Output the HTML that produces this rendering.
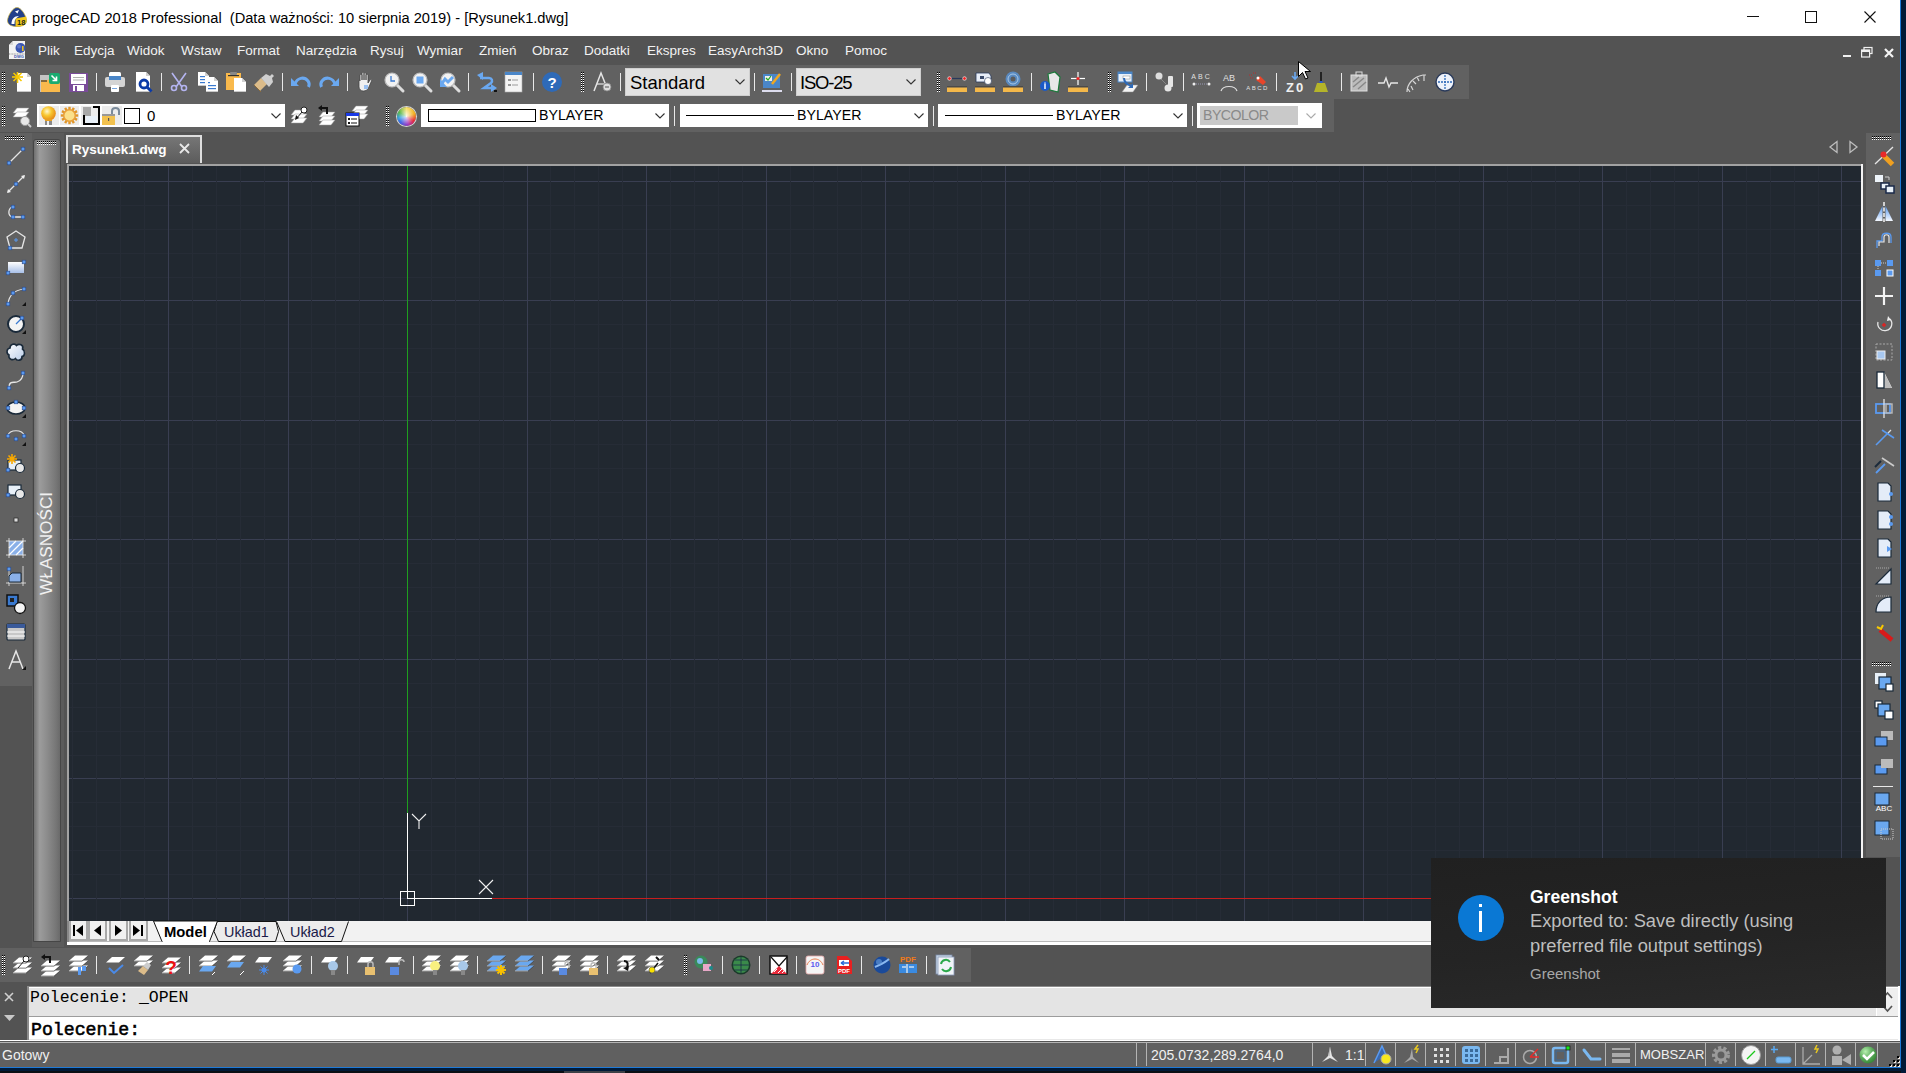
<!DOCTYPE html><html><head><meta charset="utf-8"><style>
*{margin:0;padding:0;box-sizing:border-box}
html,body{width:1906px;height:1073px;overflow:hidden;background:#535353;font-family:"Liberation Sans",sans-serif}
.a{position:absolute}
.t{position:absolute;white-space:nowrap;line-height:1}
svg{position:absolute;overflow:visible}
</style></head><body><div class="a" style="left:0px;top:0px;width:1906px;height:36px;background:#ffffff;"></div>
<svg style="left:7px;top:7px" width="20" height="20" viewBox="0 0 20 20"><path d="M10 0.5C14 0.5 19 8 19.5 13.5C19.5 18 15 19.5 10 19.5C5 19.5 0.5 18 0.5 13.5C1 8 6 0.5 10 0.5z" fill="#23408a" stroke="#c8b040" stroke-width="0.7"/><path d="M8.5 11.5L19.3 9.5C19.5 11.5 19.5 13.5 19.5 13.5C19.5 18 15 19.5 10 19.5L8.5 19.5z" fill="#f2c81a"/><path d="M4.5 17C4.5 12 7 9 12 9L9.5 11C8 12 7.5 14 7.5 17z" fill="#fff"/><path d="M8 4.5l4-1.5-1.5 3.5z" fill="#fff"/><text x="14.2" y="17.5" font-size="7.5" font-weight="bold" text-anchor="middle" fill="#1a2a1a" font-family="Liberation Sans">18</text></svg>
<div class="t" style="left:32px;top:11px;font-size:14.65px;color:#000;">progeCAD 2018 Professional&nbsp; (Data ważności: 10 sierpnia 2019) - [Rysunek1.dwg]</div>
<div class="a" style="left:1747px;top:16px;width:12px;height:1px;background:#111;"></div>
<div class="a" style="left:1805px;top:11px;width:12px;height:12px;background:transparent;border:1px solid #111"></div>
<svg style="left:1864px;top:11px" width="12" height="12" viewBox="0 0 12 12"><path d="M0.5 0.5l11 11M11.5 0.5l-11 11" stroke="#111" stroke-width="1.1"/></svg>
<div class="a" style="left:0px;top:36px;width:1900px;height:29px;background:#535353;"></div>
<svg style="left:9px;top:41px" width="16" height="18" viewBox="0 0 16 18"><path d="M4 0h12v18h-16v-14z" fill="#f2f2f2"/><path d="M0 4l4-4v4z" fill="#d8d8d8"/><circle cx="11.5" cy="7" r="5" fill="#3a56b0"/><circle cx="10" cy="5.5" r="2" fill="#7a8ad8" opacity="0.6"/><rect x="13" y="5" width="1.6" height="5" fill="#e8c020"/><path d="M0 13h16" stroke="#555" stroke-width="0.6" stroke-dasharray="1 0.6"/><text x="10" y="17.3" font-size="4" font-weight="bold" fill="#3a56b0" font-family="Liberation Sans" text-anchor="middle">DWG</text></svg>
<div class="t" style="left:38px;top:44px;font-size:13.5px;color:#f2f2f2;">Plik</div>
<div class="t" style="left:74px;top:44px;font-size:13.5px;color:#f2f2f2;">Edycja</div>
<div class="t" style="left:127px;top:44px;font-size:13.5px;color:#f2f2f2;">Widok</div>
<div class="t" style="left:181px;top:44px;font-size:13.5px;color:#f2f2f2;">Wstaw</div>
<div class="t" style="left:237px;top:44px;font-size:13.5px;color:#f2f2f2;">Format</div>
<div class="t" style="left:296px;top:44px;font-size:13.5px;color:#f2f2f2;">Narzędzia</div>
<div class="t" style="left:370px;top:44px;font-size:13.5px;color:#f2f2f2;">Rysuj</div>
<div class="t" style="left:417px;top:44px;font-size:13.5px;color:#f2f2f2;">Wymiar</div>
<div class="t" style="left:479px;top:44px;font-size:13.5px;color:#f2f2f2;">Zmień</div>
<div class="t" style="left:532px;top:44px;font-size:13.5px;color:#f2f2f2;">Obraz</div>
<div class="t" style="left:584px;top:44px;font-size:13.5px;color:#f2f2f2;">Dodatki</div>
<div class="t" style="left:647px;top:44px;font-size:13.5px;color:#f2f2f2;">Ekspres</div>
<div class="t" style="left:708px;top:44px;font-size:13.5px;color:#f2f2f2;">EasyArch3D</div>
<div class="t" style="left:796px;top:44px;font-size:13.5px;color:#f2f2f2;">Okno</div>
<div class="t" style="left:845px;top:44px;font-size:13.5px;color:#f2f2f2;">Pomoc</div>
<div class="a" style="left:1843px;top:55px;width:8px;height:2px;background:#f0f0f0;"></div>
<svg style="left:1861px;top:47px" width="12" height="11" viewBox="0 0 12 11"><rect x="3" y="0.5" width="8" height="6" fill="none" stroke="#f0f0f0" stroke-width="1.2"/><rect x="0.6" y="3" width="8" height="7" fill="#535353" stroke="#f0f0f0" stroke-width="1.2"/><rect x="0.6" y="3" width="8" height="2" fill="#f0f0f0"/></svg>
<svg style="left:1884px;top:48px" width="10" height="10" viewBox="0 0 10 10"><path d="M1 1l8 8M9 1l-8 8" stroke="#f4f4f4" stroke-width="2.2"/></svg>
<div class="a" style="left:0px;top:65px;width:1469px;height:34px;background:#616161;"></div>
<div class="a" style="left:0px;top:99px;width:1334px;height:33px;background:#616161;"></div>
<svg style="left:2px;top:72px" width="3" height="20" viewBox="0 0 3 20" shape-rendering="crispEdges"><rect x="0" y="0" width="1" height="1" fill="#000"/><rect x="2" y="0" width="1" height="1" fill="#000"/><rect x="0" y="1" width="1" height="1" fill="#fff"/><rect x="2" y="1" width="1" height="1" fill="#fff"/><rect x="0" y="2" width="1" height="1" fill="#000"/><rect x="2" y="2" width="1" height="1" fill="#000"/><rect x="0" y="3" width="1" height="1" fill="#fff"/><rect x="2" y="3" width="1" height="1" fill="#fff"/><rect x="0" y="4" width="1" height="1" fill="#000"/><rect x="2" y="4" width="1" height="1" fill="#000"/><rect x="0" y="5" width="1" height="1" fill="#fff"/><rect x="2" y="5" width="1" height="1" fill="#fff"/><rect x="0" y="6" width="1" height="1" fill="#000"/><rect x="2" y="6" width="1" height="1" fill="#000"/><rect x="0" y="7" width="1" height="1" fill="#fff"/><rect x="2" y="7" width="1" height="1" fill="#fff"/><rect x="0" y="8" width="1" height="1" fill="#000"/><rect x="2" y="8" width="1" height="1" fill="#000"/><rect x="0" y="9" width="1" height="1" fill="#fff"/><rect x="2" y="9" width="1" height="1" fill="#fff"/><rect x="0" y="10" width="1" height="1" fill="#000"/><rect x="2" y="10" width="1" height="1" fill="#000"/><rect x="0" y="11" width="1" height="1" fill="#fff"/><rect x="2" y="11" width="1" height="1" fill="#fff"/><rect x="0" y="12" width="1" height="1" fill="#000"/><rect x="2" y="12" width="1" height="1" fill="#000"/><rect x="0" y="13" width="1" height="1" fill="#fff"/><rect x="2" y="13" width="1" height="1" fill="#fff"/><rect x="0" y="14" width="1" height="1" fill="#000"/><rect x="2" y="14" width="1" height="1" fill="#000"/><rect x="0" y="15" width="1" height="1" fill="#fff"/><rect x="2" y="15" width="1" height="1" fill="#fff"/><rect x="0" y="16" width="1" height="1" fill="#000"/><rect x="2" y="16" width="1" height="1" fill="#000"/><rect x="0" y="17" width="1" height="1" fill="#fff"/><rect x="2" y="17" width="1" height="1" fill="#fff"/><rect x="0" y="18" width="1" height="1" fill="#000"/><rect x="2" y="18" width="1" height="1" fill="#000"/><rect x="0" y="19" width="1" height="1" fill="#fff"/><rect x="2" y="19" width="1" height="1" fill="#fff"/></svg>
<svg style="left:12px;top:72px" width="20" height="20" viewBox="0 0 20 20"><path d="M5 1h10l4 4v15h-14z" fill="#fff"/><path d="M15 1v4h4" fill="#d0d0d0"/><path d="M5 20h14v-1h-14z" fill="#c8c8c8"/><g stroke="#f8c800" stroke-width="1.6"><line x1="0" y1="5" x2="11" y2="5"/><line x1="5.5" y1="0" x2="5.5" y2="11"/><line x1="1.5" y1="1" x2="9.5" y2="9"/><line x1="9.5" y1="1" x2="1.5" y2="9"/></g></svg>
<svg style="left:40px;top:72px" width="20" height="20" viewBox="0 0 20 20"><rect x="0" y="3" width="9" height="17" fill="#c4c4c4"/><path d="M1 8h7l2-2h10v14h-19z" fill="#f9b94c"/><path d="M1 9h6" stroke="#333" stroke-width="1.2"/><rect x="9" y="1" width="11" height="11" rx="2" fill="#1aab70"/><path d="M11.5 3.5l5 5m0-4v4h-4" stroke="#fff" stroke-width="1.6" fill="none"/></svg>
<svg style="left:69px;top:72px" width="20" height="20" viewBox="0 0 20 20"><rect x="0" y="1" width="19" height="19" fill="#7a4c9a"/><rect x="2" y="2" width="15" height="10" fill="#fff"/><rect x="4" y="5" width="11" height="1" fill="#b0b0b0"/><rect x="4" y="7.5" width="11" height="1" fill="#b0b0b0"/><rect x="4" y="13" width="11" height="6" fill="#fff"/><rect x="6" y="14" width="2" height="5" fill="#7a4c9a"/></svg>
<div class="a" style="left:96px;top:73px;width:1px;height:18px;background:#e8e8e8;"></div>
<svg style="left:105px;top:72px" width="20" height="20" viewBox="0 0 20 20"><rect x="4" y="0" width="12" height="6" rx="1.5" fill="#fff"/><rect x="0" y="5" width="20" height="10" rx="2" fill="#d4d4d4"/><rect x="4" y="4" width="12" height="4" fill="#4a86c8"/><rect x="6" y="13" width="8" height="7" rx="1" fill="#fff"/><rect x="7" y="16" width="5" height="1" fill="#7aa8e0"/></svg>
<svg style="left:136px;top:72px" width="20" height="20" viewBox="0 0 20 20"><path d="M0 0h10l4 4v16h-14z" fill="#fff"/><path d="M10 0v4h4" fill="#d0d0d0"/><path d="M0 20h14v-1h-14z" fill="#c8c8c8"/><circle cx="8" cy="12" r="4" fill="none" stroke="#0a3aa8" stroke-width="2.8"/><path d="M10.5 14.5l5 5" stroke="#0a3aa8" stroke-width="3"/></svg>
<div class="a" style="left:161px;top:73px;width:1px;height:18px;background:#e8e8e8;"></div>
<svg style="left:170px;top:72px" width="20" height="20" viewBox="0 0 20 20"><g stroke="#b4b4f0" stroke-width="1.6" fill="none"><path d="M2 1l10 14M16 1l-10 14"/><circle cx="4" cy="16" r="2.5"/><circle cx="14" cy="16" r="2.5"/></g></svg>
<svg style="left:198px;top:72px" width="20" height="20" viewBox="0 0 20 20"><path d="M0 0h7l4 4v10h-11z" fill="#fff"/><path d="M7 0v4h4" fill="#d0d0d0"/><path d="M0 14h11v-1h-11z" fill="#c8c8c8"/><rect x="2" y="4" width="5" height="1.2" fill="#3a7ad0"/><rect x="2" y="7" width="5" height="1.2" fill="#3a7ad0"/><rect x="2" y="10" width="5" height="1.2" fill="#3a7ad0"/><path d="M8 5h8l4 4v11h-12z" fill="#fff"/><path d="M16 5v4h4" fill="#d0d0d0"/><path d="M8 20h12v-1h-12z" fill="#c8c8c8"/><rect x="10" y="10" width="2" height="1.2" fill="#3a7ad0"/><rect x="10" y="13" width="8" height="1.2" fill="#3a7ad0"/><rect x="10" y="16" width="8" height="1.2" fill="#3a7ad0"/></svg>
<svg style="left:226px;top:72px" width="20" height="20" viewBox="0 0 20 20"><rect x="0" y="1" width="15" height="17" fill="#f9b94c"/><rect x="4" y="0" width="7" height="3" rx="1" fill="#888"/><rect x="2" y="3" width="11" height="1.2" fill="#333"/><path d="M8 6h8l4 4v10h-12z" fill="#fff"/><path d="M16 6v4h4" fill="#d0d0d0"/><path d="M8 20h12v-1h-12z" fill="#c8c8c8"/></svg>
<svg style="left:254px;top:72px" width="20" height="20" viewBox="0 0 20 20"><path d="M0 13l7-7 6 6-7 7z" fill="#dcbc8a"/><path d="M0 13l7 7" stroke="#8a6a3a" stroke-width="1"/><path d="M7 6l5-4 4 2 2-2 2 2-2 2 1 4-4 5z" fill="#cfcfcf"/></svg>
<div class="a" style="left:282px;top:73px;width:1px;height:18px;background:#e8e8e8;"></div>
<svg style="left:291px;top:72px" width="20" height="20" viewBox="0 0 20 20"><path d="M4 12c2-6 9-8 13-3 1.5 2 1.5 4 0.5 6" fill="none" stroke="#6aa8f0" stroke-width="3"/><path d="M0 6v8h8z" fill="#6aa8f0"/></svg>
<svg style="left:319px;top:72px" width="20" height="20" viewBox="0 0 20 20"><path d="M16 12c-2-6-9-8-13-3-1.5 2-1.5 4-0.5 6" fill="none" stroke="#6aa8f0" stroke-width="3"/><path d="M20 6v8h-8z" fill="#6aa8f0"/></svg>
<div class="a" style="left:347px;top:73px;width:1px;height:18px;background:#e8e8e8;"></div>
<svg style="left:356px;top:72px" width="20" height="20" viewBox="0 0 20 20"><path d="M4 9V3c0-1 2-1 2 0v5V1c0-1 2-1 2 0v7V1.5c0-1 2-1 2 0V8V3c0-1 2-1 2 0v8l2-3c1-1 2 0 1.5 1l-3 7c-1 2-3 3-5 3H7c-2 0-4-2-4-4V9c0-1 1-1 1 0z" fill="#f0f0f0" stroke="#444" stroke-width="0.8"/><rect x="8" y="13" width="4" height="4" fill="#9ac0f0"/></svg>
<svg style="left:384px;top:72px" width="20" height="20" viewBox="0 0 20 20"><line x1="12" y1="12" x2="19" y2="19" stroke="#ddd" stroke-width="3" stroke-linecap="round"/><circle cx="8" cy="8" r="7" fill="#f2f2f2" stroke="#bbb" stroke-width="1.2"/><path d="M7 4v5h4" stroke="#3a7ad0" stroke-width="1.3" fill="none"/></svg>
<svg style="left:412px;top:72px" width="20" height="20" viewBox="0 0 20 20"><line x1="12" y1="12" x2="19" y2="19" stroke="#ddd" stroke-width="3" stroke-linecap="round"/><circle cx="8" cy="8" r="7" fill="#f2f2f2" stroke="#bbb" stroke-width="1.2"/><rect x="4.5" y="4.5" width="7" height="7" fill="#6aa8f0"/></svg>
<svg style="left:440px;top:72px" width="20" height="20" viewBox="0 0 20 20"><line x1="12" y1="12" x2="19" y2="19" stroke="#ddd" stroke-width="3" stroke-linecap="round"/><circle cx="8" cy="8" r="7" fill="#f2f2f2" stroke="#bbb" stroke-width="1.2"/><path d="M1 13l4-6 3 3 5-5" stroke="#6aa8f0" stroke-width="3" fill="none"/><path d="M0 7v8h7z" fill="#6aa8f0"/></svg>
<div class="a" style="left:468px;top:73px;width:1px;height:18px;background:#e8e8e8;"></div>
<svg style="left:477px;top:72px" width="20" height="20" viewBox="0 0 20 20"><path d="M3 6h9c3 0 4 3 2 5l-7 5h8" stroke="#6aa8f0" stroke-width="2.5" fill="none"/><path d="M0 3l6-3v8z" fill="#6aa8f0"/><path d="M20 16l-6 4v-8z" fill="#6aa8f0"/><rect x="17" y="18" width="3" height="2" fill="#111"/></svg>
<svg style="left:505px;top:72px" width="20" height="20" viewBox="0 0 20 20"><rect x="0" y="0" width="17" height="20" fill="#f4f4f4" stroke="#aaa" stroke-width="0.6"/><rect x="0" y="0" width="17" height="3" fill="#4a86c8"/><rect x="3" y="7" width="3" height="2" fill="#999"/><rect x="7" y="7.5" width="6" height="1" fill="#999"/><rect x="3" y="12" width="3" height="2" fill="#999"/><rect x="7" y="12.5" width="6" height="1" fill="#999"/></svg>
<div class="a" style="left:533px;top:73px;width:1px;height:18px;background:#e8e8e8;"></div>
<svg style="left:542px;top:72px" width="20" height="20" viewBox="0 0 20 20"><circle cx="10" cy="10" r="10" fill="#2e6ab8"/><text x="10" y="15.5" font-size="15" font-weight="bold" text-anchor="middle" fill="#fff" font-family="Liberation Sans">?</text></svg>
<svg style="left:581px;top:72px" width="3" height="20" viewBox="0 0 3 20" shape-rendering="crispEdges"><rect x="0" y="0" width="1" height="1" fill="#000"/><rect x="2" y="0" width="1" height="1" fill="#000"/><rect x="0" y="1" width="1" height="1" fill="#fff"/><rect x="2" y="1" width="1" height="1" fill="#fff"/><rect x="0" y="2" width="1" height="1" fill="#000"/><rect x="2" y="2" width="1" height="1" fill="#000"/><rect x="0" y="3" width="1" height="1" fill="#fff"/><rect x="2" y="3" width="1" height="1" fill="#fff"/><rect x="0" y="4" width="1" height="1" fill="#000"/><rect x="2" y="4" width="1" height="1" fill="#000"/><rect x="0" y="5" width="1" height="1" fill="#fff"/><rect x="2" y="5" width="1" height="1" fill="#fff"/><rect x="0" y="6" width="1" height="1" fill="#000"/><rect x="2" y="6" width="1" height="1" fill="#000"/><rect x="0" y="7" width="1" height="1" fill="#fff"/><rect x="2" y="7" width="1" height="1" fill="#fff"/><rect x="0" y="8" width="1" height="1" fill="#000"/><rect x="2" y="8" width="1" height="1" fill="#000"/><rect x="0" y="9" width="1" height="1" fill="#fff"/><rect x="2" y="9" width="1" height="1" fill="#fff"/><rect x="0" y="10" width="1" height="1" fill="#000"/><rect x="2" y="10" width="1" height="1" fill="#000"/><rect x="0" y="11" width="1" height="1" fill="#fff"/><rect x="2" y="11" width="1" height="1" fill="#fff"/><rect x="0" y="12" width="1" height="1" fill="#000"/><rect x="2" y="12" width="1" height="1" fill="#000"/><rect x="0" y="13" width="1" height="1" fill="#fff"/><rect x="2" y="13" width="1" height="1" fill="#fff"/><rect x="0" y="14" width="1" height="1" fill="#000"/><rect x="2" y="14" width="1" height="1" fill="#000"/><rect x="0" y="15" width="1" height="1" fill="#fff"/><rect x="2" y="15" width="1" height="1" fill="#fff"/><rect x="0" y="16" width="1" height="1" fill="#000"/><rect x="2" y="16" width="1" height="1" fill="#000"/><rect x="0" y="17" width="1" height="1" fill="#fff"/><rect x="2" y="17" width="1" height="1" fill="#fff"/><rect x="0" y="18" width="1" height="1" fill="#000"/><rect x="2" y="18" width="1" height="1" fill="#000"/><rect x="0" y="19" width="1" height="1" fill="#fff"/><rect x="2" y="19" width="1" height="1" fill="#fff"/></svg>
<svg style="left:593px;top:72px" width="20" height="20" viewBox="0 0 20 20"><path d="M1 19l7-18 6 15" stroke="#e6e6e6" stroke-width="1.5" fill="none"/><path d="M4 12h7" stroke="#e6e6e6" stroke-width="1.2"/><circle cx="14" cy="15" r="4" fill="#ddd" stroke="#888" stroke-width="0.8"/><rect x="12" y="14.5" width="4" height="1" fill="#555"/></svg>
<div class="a" style="left:620px;top:73px;width:1px;height:18px;background:#e8e8e8;"></div>
<div class="a" style="left:625px;top:68px;width:125px;height:28px;background:#e1e1e1;border:1px solid #cfcfcf"></div>
<div class="t" style="left:630px;top:74px;font-size:18.5px;color:#000;">Standard</div>
<svg style="left:735px;top:79px" width="10" height="6" viewBox="0 0 10 6"><path d="M0.5 0.5l4.5 4.5 4.5-4.5" stroke="#333" stroke-width="1.1" fill="none"/></svg>
<div class="a" style="left:754px;top:73px;width:1px;height:18px;background:#e8e8e8;"></div>
<svg style="left:762px;top:72px" width="20" height="20" viewBox="0 0 20 20"><rect x="1" y="2" width="17" height="14" fill="#4a86c8"/><rect x="3" y="4" width="7" height="5" fill="#eee"/><path d="M4 6l2 2 3-4" stroke="#2a2" stroke-width="1.2" fill="none"/><path d="M18 2l-8 10" stroke="#f0a820" stroke-width="2.5"/><rect x="0" y="18" width="20" height="2" fill="#dde"/></svg>
<div class="a" style="left:791px;top:73px;width:1px;height:18px;background:#e8e8e8;"></div>
<div class="a" style="left:796px;top:68px;width:125px;height:28px;background:#e1e1e1;border:1px solid #cfcfcf"></div>
<div class="t" style="left:800px;top:74px;font-size:18.5px;color:#000;letter-spacing:-1.2px">ISO-25</div>
<svg style="left:906px;top:79px" width="10" height="6" viewBox="0 0 10 6"><path d="M0.5 0.5l4.5 4.5 4.5-4.5" stroke="#333" stroke-width="1.1" fill="none"/></svg>
<svg style="left:937px;top:72px" width="3" height="20" viewBox="0 0 3 20" shape-rendering="crispEdges"><rect x="0" y="0" width="1" height="1" fill="#000"/><rect x="2" y="0" width="1" height="1" fill="#000"/><rect x="0" y="1" width="1" height="1" fill="#fff"/><rect x="2" y="1" width="1" height="1" fill="#fff"/><rect x="0" y="2" width="1" height="1" fill="#000"/><rect x="2" y="2" width="1" height="1" fill="#000"/><rect x="0" y="3" width="1" height="1" fill="#fff"/><rect x="2" y="3" width="1" height="1" fill="#fff"/><rect x="0" y="4" width="1" height="1" fill="#000"/><rect x="2" y="4" width="1" height="1" fill="#000"/><rect x="0" y="5" width="1" height="1" fill="#fff"/><rect x="2" y="5" width="1" height="1" fill="#fff"/><rect x="0" y="6" width="1" height="1" fill="#000"/><rect x="2" y="6" width="1" height="1" fill="#000"/><rect x="0" y="7" width="1" height="1" fill="#fff"/><rect x="2" y="7" width="1" height="1" fill="#fff"/><rect x="0" y="8" width="1" height="1" fill="#000"/><rect x="2" y="8" width="1" height="1" fill="#000"/><rect x="0" y="9" width="1" height="1" fill="#fff"/><rect x="2" y="9" width="1" height="1" fill="#fff"/><rect x="0" y="10" width="1" height="1" fill="#000"/><rect x="2" y="10" width="1" height="1" fill="#000"/><rect x="0" y="11" width="1" height="1" fill="#fff"/><rect x="2" y="11" width="1" height="1" fill="#fff"/><rect x="0" y="12" width="1" height="1" fill="#000"/><rect x="2" y="12" width="1" height="1" fill="#000"/><rect x="0" y="13" width="1" height="1" fill="#fff"/><rect x="2" y="13" width="1" height="1" fill="#fff"/><rect x="0" y="14" width="1" height="1" fill="#000"/><rect x="2" y="14" width="1" height="1" fill="#000"/><rect x="0" y="15" width="1" height="1" fill="#fff"/><rect x="2" y="15" width="1" height="1" fill="#fff"/><rect x="0" y="16" width="1" height="1" fill="#000"/><rect x="2" y="16" width="1" height="1" fill="#000"/><rect x="0" y="17" width="1" height="1" fill="#fff"/><rect x="2" y="17" width="1" height="1" fill="#fff"/><rect x="0" y="18" width="1" height="1" fill="#000"/><rect x="2" y="18" width="1" height="1" fill="#000"/><rect x="0" y="19" width="1" height="1" fill="#fff"/><rect x="2" y="19" width="1" height="1" fill="#fff"/></svg>
<svg style="left:947px;top:72px" width="20" height="20" viewBox="0 0 20 20"><line x1="2" y1="6.5" x2="18" y2="6.5" stroke="#2a3a5a" stroke-width="1.2"/><circle cx="2.5" cy="6.5" r="1.8" fill="#e22" stroke="#fff" stroke-width="0.6"/><circle cx="17.5" cy="6.5" r="1.8" fill="#e22" stroke="#fff" stroke-width="0.6"/><rect x="0" y="14" width="20" height="6" fill="#f4b84a"/><rect x="0" y="14" width="20" height="1.5" fill="#4a4a4a"/></svg>
<svg style="left:975px;top:72px" width="20" height="20" viewBox="0 0 20 20"><path d="M1 1h13l2 3v6c-2 2-5 2-6 0h-9z" fill="#e8eef8" stroke="#2a3a5a" stroke-width="0.8"/><circle cx="13" cy="9" r="3.5" fill="#fff" stroke="#2a3a5a" stroke-width="0.6"/><rect x="5" y="4" width="4" height="3" fill="#3a4a6a"/><rect x="0" y="14" width="20" height="6" fill="#f4b84a"/><rect x="0" y="14" width="20" height="1.5" fill="#4a4a4a"/></svg>
<svg style="left:1003px;top:72px" width="20" height="20" viewBox="0 0 20 20"><circle cx="10" cy="7" r="7.5" fill="#5a8ac0"/><circle cx="10" cy="7" r="5" fill="none" stroke="#a8c8e8" stroke-width="1"/><circle cx="10" cy="7" r="2.5" fill="#5c5c5c"/><rect x="0" y="14" width="20" height="6" fill="#f4b84a"/><rect x="0" y="14" width="20" height="1.5" fill="#4a4a4a"/></svg>
<div class="a" style="left:1031px;top:73px;width:1px;height:18px;background:#e8e8e8;"></div>
<svg style="left:1040px;top:72px" width="20" height="20" viewBox="0 0 20 20"><path d="M8 2l7-2 5 5-2 15-8-2z" fill="#e8e8e8" stroke="#1a7a3a" stroke-width="1.2"/><circle cx="5" cy="14" r="5" fill="#1a5ac8"/><rect x="4.3" y="12" width="1.4" height="5" fill="#fff"/><rect x="4.3" y="10.5" width="1.4" height="1.2" fill="#fff"/></svg>
<svg style="left:1068px;top:72px" width="20" height="20" viewBox="0 0 20 20"><line x1="3" y1="6.5" x2="17" y2="6.5" stroke="#fff" stroke-width="1.2"/><line x1="10" y1="0" x2="10" y2="13" stroke="#fff" stroke-width="1.2"/><circle cx="10" cy="6.5" r="1.6" fill="#e22"/><rect x="0" y="14" width="20" height="6" fill="#f4b84a"/><rect x="0" y="14" width="20" height="1.5" fill="#4a4a4a"/></svg>
<svg style="left:1108px;top:72px" width="3" height="20" viewBox="0 0 3 20" shape-rendering="crispEdges"><rect x="0" y="0" width="1" height="1" fill="#000"/><rect x="2" y="0" width="1" height="1" fill="#000"/><rect x="0" y="1" width="1" height="1" fill="#fff"/><rect x="2" y="1" width="1" height="1" fill="#fff"/><rect x="0" y="2" width="1" height="1" fill="#000"/><rect x="2" y="2" width="1" height="1" fill="#000"/><rect x="0" y="3" width="1" height="1" fill="#fff"/><rect x="2" y="3" width="1" height="1" fill="#fff"/><rect x="0" y="4" width="1" height="1" fill="#000"/><rect x="2" y="4" width="1" height="1" fill="#000"/><rect x="0" y="5" width="1" height="1" fill="#fff"/><rect x="2" y="5" width="1" height="1" fill="#fff"/><rect x="0" y="6" width="1" height="1" fill="#000"/><rect x="2" y="6" width="1" height="1" fill="#000"/><rect x="0" y="7" width="1" height="1" fill="#fff"/><rect x="2" y="7" width="1" height="1" fill="#fff"/><rect x="0" y="8" width="1" height="1" fill="#000"/><rect x="2" y="8" width="1" height="1" fill="#000"/><rect x="0" y="9" width="1" height="1" fill="#fff"/><rect x="2" y="9" width="1" height="1" fill="#fff"/><rect x="0" y="10" width="1" height="1" fill="#000"/><rect x="2" y="10" width="1" height="1" fill="#000"/><rect x="0" y="11" width="1" height="1" fill="#fff"/><rect x="2" y="11" width="1" height="1" fill="#fff"/><rect x="0" y="12" width="1" height="1" fill="#000"/><rect x="2" y="12" width="1" height="1" fill="#000"/><rect x="0" y="13" width="1" height="1" fill="#fff"/><rect x="2" y="13" width="1" height="1" fill="#fff"/><rect x="0" y="14" width="1" height="1" fill="#000"/><rect x="2" y="14" width="1" height="1" fill="#000"/><rect x="0" y="15" width="1" height="1" fill="#fff"/><rect x="2" y="15" width="1" height="1" fill="#fff"/><rect x="0" y="16" width="1" height="1" fill="#000"/><rect x="2" y="16" width="1" height="1" fill="#000"/><rect x="0" y="17" width="1" height="1" fill="#fff"/><rect x="2" y="17" width="1" height="1" fill="#fff"/><rect x="0" y="18" width="1" height="1" fill="#000"/><rect x="2" y="18" width="1" height="1" fill="#000"/><rect x="0" y="19" width="1" height="1" fill="#fff"/><rect x="2" y="19" width="1" height="1" fill="#fff"/></svg>
<svg style="left:1118px;top:72px" width="20" height="20" viewBox="0 0 20 20"><rect x="0" y="0" width="14" height="10" fill="#e8f0fa" stroke="#4a86c8" stroke-width="1"/><rect x="0" y="0" width="14" height="2" fill="#4a86c8"/><rect x="5" y="4" width="7" height="3" fill="#fff" stroke="#888" stroke-width="0.5"/><path d="M4 20l5-7h11l-5 7z" fill="#f4f4f4" stroke="#888" stroke-width="0.5"/><path d="M6 6c0 5 4 7 8 8" stroke="#2e6ab8" stroke-width="2" fill="none"/><path d="M15 11v5h-5z" fill="#2e6ab8"/></svg>
<div class="a" style="left:1146px;top:73px;width:1px;height:18px;background:#e8e8e8;"></div>
<svg style="left:1155px;top:72px" width="20" height="20" viewBox="0 0 20 20"><circle cx="4" cy="4" r="3.5" fill="#ddd"/><rect x="13" y="4" width="5" height="11" rx="1" fill="#e6e6e6"/><circle cx="13" cy="16" r="3.5" fill="#e6e6e6"/><path d="M6 7l5 5" stroke="#888" stroke-width="1"/></svg>
<div class="a" style="left:1183px;top:73px;width:1px;height:18px;background:#e8e8e8;"></div>
<svg style="left:1192px;top:72px" width="20" height="20" viewBox="0 0 20 20"><text x="9.5" y="7" font-size="7" text-anchor="middle" fill="#e0e0e0" font-family="Liberation Sans" letter-spacing="2">ABC</text><line x1="2" y1="12" x2="17" y2="12" stroke="#aac" stroke-width="0.8" stroke-dasharray="1 1"/><circle cx="2" cy="12" r="1.5" fill="#eee"/><circle cx="17" cy="12" r="1.5" fill="#eee"/></svg>
<svg style="left:1220px;top:72px" width="20" height="20" viewBox="0 0 20 20"><text x="9" y="9" font-size="9" text-anchor="middle" fill="#e0e0e0" font-family="Liberation Sans">AB</text><path d="M1 19c2-6 14-6 16 0" stroke="#e0e0e0" stroke-width="1.2" fill="none"/></svg>
<svg style="left:1248px;top:72px" width="20" height="20" viewBox="0 0 20 20"><text x="9.5" y="18" font-size="6" text-anchor="middle" fill="#e0e0e0" font-family="Liberation Sans" letter-spacing="1.5">ABCD</text><path d="M8 8l4-4 6 6-3 3z" fill="#e8452a"/><circle cx="10" cy="6" r="1.5" fill="#fff"/><path d="M1 3h3M5 1h3M2 6h3" stroke="#c22" stroke-width="0.8" stroke-dasharray="1 1"/></svg>
<div class="a" style="left:1276px;top:73px;width:1px;height:18px;background:#e8e8e8;"></div>
<svg style="left:1285px;top:72px" width="20" height="20" viewBox="0 0 20 20"><text x="1" y="20" font-size="13" font-weight="bold" fill="#f0f0f0" font-family="Liberation Sans">Z</text><text x="11" y="20" font-size="13" font-weight="bold" fill="#f0f0f0" font-family="Liberation Sans">0</text><path d="M10 0v7M7 4l3 3 3-3" stroke="#6aa8f0" stroke-width="1.6" fill="none"/></svg>
<svg style="left:1314px;top:72px" width="20" height="20" viewBox="0 0 20 20"><rect x="6" y="0" width="2" height="10" fill="#222"/><rect x="5.5" y="9" width="3" height="2" fill="#2a5ad0"/><path d="M3 11h8l3 9h-14z" fill="#b4b42a"/></svg>
<div class="a" style="left:1341px;top:73px;width:1px;height:18px;background:#e8e8e8;"></div>
<svg style="left:1350px;top:72px" width="20" height="20" viewBox="0 0 20 20"><rect x="1" y="3" width="16" height="16" fill="#bcbcbc" stroke="#e0e0e0" stroke-width="1"/><rect x="6" y="0" width="6" height="4" fill="none" stroke="#ddd" stroke-width="1"/><path d="M3 15l11-9M3 10l6-5M8 17l8-7" stroke="#888" stroke-width="1.5"/></svg>
<svg style="left:1378px;top:72px" width="20" height="20" viewBox="0 0 20 20"><path d="M0 11h6l2-5 3 9 2-4h7" stroke="#e6e6e6" stroke-width="1.4" fill="none"/></svg>
<svg style="left:1406px;top:72px" width="20" height="20" viewBox="0 0 20 20"><path d="M1 20c0-8 6-15 16-17M4 20l-2-3M7 18l-2-4M10 12l-3-3M13 9l-2-4M17 3h3M18 3v6" stroke="#d6d6d6" stroke-width="1.2" fill="none"/></svg>
<svg style="left:1435px;top:72px" width="20" height="20" viewBox="0 0 20 20"><circle cx="10" cy="10" r="9" fill="#eef2fa" stroke="#2a3a5a" stroke-width="1.4"/><path d="M10 3v14M3 10h14" stroke="#2e6ab8" stroke-width="1.3" stroke-dasharray="2 1"/></svg>
<svg style="left:2px;top:106px" width="3" height="20" viewBox="0 0 3 20" shape-rendering="crispEdges"><rect x="0" y="0" width="1" height="1" fill="#000"/><rect x="2" y="0" width="1" height="1" fill="#000"/><rect x="0" y="1" width="1" height="1" fill="#fff"/><rect x="2" y="1" width="1" height="1" fill="#fff"/><rect x="0" y="2" width="1" height="1" fill="#000"/><rect x="2" y="2" width="1" height="1" fill="#000"/><rect x="0" y="3" width="1" height="1" fill="#fff"/><rect x="2" y="3" width="1" height="1" fill="#fff"/><rect x="0" y="4" width="1" height="1" fill="#000"/><rect x="2" y="4" width="1" height="1" fill="#000"/><rect x="0" y="5" width="1" height="1" fill="#fff"/><rect x="2" y="5" width="1" height="1" fill="#fff"/><rect x="0" y="6" width="1" height="1" fill="#000"/><rect x="2" y="6" width="1" height="1" fill="#000"/><rect x="0" y="7" width="1" height="1" fill="#fff"/><rect x="2" y="7" width="1" height="1" fill="#fff"/><rect x="0" y="8" width="1" height="1" fill="#000"/><rect x="2" y="8" width="1" height="1" fill="#000"/><rect x="0" y="9" width="1" height="1" fill="#fff"/><rect x="2" y="9" width="1" height="1" fill="#fff"/><rect x="0" y="10" width="1" height="1" fill="#000"/><rect x="2" y="10" width="1" height="1" fill="#000"/><rect x="0" y="11" width="1" height="1" fill="#fff"/><rect x="2" y="11" width="1" height="1" fill="#fff"/><rect x="0" y="12" width="1" height="1" fill="#000"/><rect x="2" y="12" width="1" height="1" fill="#000"/><rect x="0" y="13" width="1" height="1" fill="#fff"/><rect x="2" y="13" width="1" height="1" fill="#fff"/><rect x="0" y="14" width="1" height="1" fill="#000"/><rect x="2" y="14" width="1" height="1" fill="#000"/><rect x="0" y="15" width="1" height="1" fill="#fff"/><rect x="2" y="15" width="1" height="1" fill="#fff"/><rect x="0" y="16" width="1" height="1" fill="#000"/><rect x="2" y="16" width="1" height="1" fill="#000"/><rect x="0" y="17" width="1" height="1" fill="#fff"/><rect x="2" y="17" width="1" height="1" fill="#fff"/><rect x="0" y="18" width="1" height="1" fill="#000"/><rect x="2" y="18" width="1" height="1" fill="#000"/><rect x="0" y="19" width="1" height="1" fill="#fff"/><rect x="2" y="19" width="1" height="1" fill="#fff"/></svg>
<svg style="left:12px;top:106px" width="20" height="20" viewBox="0 0 20 20"><path d="M5 2h12l-4 5h-12z" fill="#fff" stroke="#9a9a9a" stroke-width="0.5"/><path d="M5 6h12l-4 5h-12z" fill="#fff" stroke="#9a9a9a" stroke-width="0.5"/><circle cx="13" cy="15" r="4.5" fill="#e8e8e8" stroke="#999" stroke-width="1"/><path d="M16 18l3 3" stroke="#ccc" stroke-width="2"/></svg>
<div class="a" style="left:37px;top:104px;width:248px;height:23px;background:#ffffff;"></div>
<svg style="left:39px;top:106px" width="20" height="19" viewBox="0 0 20 19"><defs><radialGradient id="bg1" cx="0.4" cy="0.35" r="0.6"><stop offset="0" stop-color="#fff8d0"/><stop offset="0.5" stop-color="#f8c830"/><stop offset="1" stop-color="#e8901a"/></radialGradient></defs><rect x="0" y="0" width="20" height="19" fill="#ececec"/><circle cx="9.5" cy="7.5" r="7.3" fill="url(#bg1)"/><path d="M6 13h7v2h-7z" fill="#e8a020"/><rect x="6" y="15" width="7" height="4" fill="#8a8a8a"/><rect x="8" y="15" width="2" height="4" fill="#eee"/></svg>
<svg style="left:60px;top:106px" width="19" height="19" viewBox="0 0 19 19"><rect x="0" y="0" width="19" height="19" fill="#ececec"/><rect x="8.3" y="0.8" width="2.4" height="3.5" fill="#e0962a" transform="rotate(0 9.5 9.5)"/><rect x="8.3" y="0.8" width="2.4" height="3.5" fill="#e0962a" transform="rotate(30 9.5 9.5)"/><rect x="8.3" y="0.8" width="2.4" height="3.5" fill="#e0962a" transform="rotate(60 9.5 9.5)"/><rect x="8.3" y="0.8" width="2.4" height="3.5" fill="#e0962a" transform="rotate(90 9.5 9.5)"/><rect x="8.3" y="0.8" width="2.4" height="3.5" fill="#e0962a" transform="rotate(120 9.5 9.5)"/><rect x="8.3" y="0.8" width="2.4" height="3.5" fill="#e0962a" transform="rotate(150 9.5 9.5)"/><rect x="8.3" y="0.8" width="2.4" height="3.5" fill="#e0962a" transform="rotate(180 9.5 9.5)"/><rect x="8.3" y="0.8" width="2.4" height="3.5" fill="#e0962a" transform="rotate(210 9.5 9.5)"/><rect x="8.3" y="0.8" width="2.4" height="3.5" fill="#e0962a" transform="rotate(240 9.5 9.5)"/><rect x="8.3" y="0.8" width="2.4" height="3.5" fill="#e0962a" transform="rotate(270 9.5 9.5)"/><rect x="8.3" y="0.8" width="2.4" height="3.5" fill="#e0962a" transform="rotate(300 9.5 9.5)"/><rect x="8.3" y="0.8" width="2.4" height="3.5" fill="#e0962a" transform="rotate(330 9.5 9.5)"/><circle cx="9.5" cy="9.5" r="6.5" fill="#e8a03a"/><circle cx="9.5" cy="9.5" r="5" fill="#fbe08a"/></svg>
<svg style="left:81px;top:106px" width="19" height="19" viewBox="0 0 19 19"><rect x="0" y="0" width="19" height="19" fill="#ececec"/><rect x="2" y="1" width="8" height="9" fill="#a8a8a8"/><path d="M3 9v9h15v-17h-6" stroke="#000" stroke-width="2" fill="none"/><rect x="5" y="10" width="11" height="7" fill="#e8f0f8"/></svg>
<svg style="left:102px;top:106px" width="20" height="19" viewBox="0 0 20 19"><rect x="0" y="0" width="20" height="19" fill="#ececec"/><path d="M10 9V5c0-4 7-4 7 0v4" stroke="#7a8a9a" stroke-width="2" fill="none"/><rect x="0" y="8" width="13" height="11" fill="#f2c14e"/><rect x="0" y="8" width="13" height="2" fill="#999"/><rect x="6" y="12" width="1.2" height="3" fill="#555"/></svg>
<div class="a" style="left:124px;top:108px;width:16px;height:16px;background:#fff;border:1px solid #000"></div>
<div class="t" style="left:147px;top:108px;font-size:15px;color:#000;">0</div>
<svg style="left:271px;top:113px" width="10" height="6" viewBox="0 0 10 6"><path d="M0.5 0.5l4.5 4.5 4.5-4.5" stroke="#333" stroke-width="1.1" fill="none"/></svg>
<svg style="left:290px;top:106px" width="20" height="20" viewBox="0 0 20 20"><path d="M5 4h12l-4 5h-12z" fill="#fff" stroke="#9a9a9a" stroke-width="0.5"/><path d="M5 8h12l-4 5h-12z" fill="#fff" stroke="#9a9a9a" stroke-width="0.5"/><path d="M5 12h12l-4 5h-12z" fill="#fff" stroke="#9a9a9a" stroke-width="0.5"/><circle cx="14" cy="4" r="3" fill="#fff" stroke="#222" stroke-width="1"/><path d="M12 6l-6 7" stroke="#222" stroke-width="1"/><path d="M5 14l1-5 3 3z" fill="#111"/></svg>
<svg style="left:318px;top:106px" width="20" height="20" viewBox="0 0 20 20"><path d="M5 6h12l-4 5h-12z" fill="#fff" stroke="#9a9a9a" stroke-width="0.5"/><path d="M5 10h12l-4 5h-12z" fill="#fff" stroke="#9a9a9a" stroke-width="0.5"/><path d="M5 14h12l-4 5h-12z" fill="#fff" stroke="#9a9a9a" stroke-width="0.5"/><path d="M2 2h7v6" stroke="#111" stroke-width="2" fill="none"/><path d="M0 2l4-3v6z" fill="#111"/></svg>
<svg style="left:346px;top:106px" width="20" height="20" viewBox="0 0 20 20"><path d="M10 0h12l-4 5h-12z" fill="#fff" stroke="#9a9a9a" stroke-width="0.5"/><path d="M10 4h12l-4 5h-12z" fill="#fff" stroke="#9a9a9a" stroke-width="0.5"/><path d="M10 8h12l-4 5h-12z" fill="#fff" stroke="#9a9a9a" stroke-width="0.5"/><rect x="0" y="7" width="13" height="13" fill="#fff" stroke="#111" stroke-width="1"/><rect x="0" y="7" width="13" height="3" fill="#1a3ae8"/><rect x="2" y="12" width="2" height="2" fill="#111"/><rect x="5" y="12.5" width="6" height="1" fill="#111"/><rect x="2" y="16" width="2" height="2" fill="#111"/><rect x="5" y="16.5" width="6" height="1" fill="#111"/></svg>
<svg style="left:386px;top:106px" width="3" height="20" viewBox="0 0 3 20" shape-rendering="crispEdges"><rect x="0" y="0" width="1" height="1" fill="#000"/><rect x="2" y="0" width="1" height="1" fill="#000"/><rect x="0" y="1" width="1" height="1" fill="#fff"/><rect x="2" y="1" width="1" height="1" fill="#fff"/><rect x="0" y="2" width="1" height="1" fill="#000"/><rect x="2" y="2" width="1" height="1" fill="#000"/><rect x="0" y="3" width="1" height="1" fill="#fff"/><rect x="2" y="3" width="1" height="1" fill="#fff"/><rect x="0" y="4" width="1" height="1" fill="#000"/><rect x="2" y="4" width="1" height="1" fill="#000"/><rect x="0" y="5" width="1" height="1" fill="#fff"/><rect x="2" y="5" width="1" height="1" fill="#fff"/><rect x="0" y="6" width="1" height="1" fill="#000"/><rect x="2" y="6" width="1" height="1" fill="#000"/><rect x="0" y="7" width="1" height="1" fill="#fff"/><rect x="2" y="7" width="1" height="1" fill="#fff"/><rect x="0" y="8" width="1" height="1" fill="#000"/><rect x="2" y="8" width="1" height="1" fill="#000"/><rect x="0" y="9" width="1" height="1" fill="#fff"/><rect x="2" y="9" width="1" height="1" fill="#fff"/><rect x="0" y="10" width="1" height="1" fill="#000"/><rect x="2" y="10" width="1" height="1" fill="#000"/><rect x="0" y="11" width="1" height="1" fill="#fff"/><rect x="2" y="11" width="1" height="1" fill="#fff"/><rect x="0" y="12" width="1" height="1" fill="#000"/><rect x="2" y="12" width="1" height="1" fill="#000"/><rect x="0" y="13" width="1" height="1" fill="#fff"/><rect x="2" y="13" width="1" height="1" fill="#fff"/><rect x="0" y="14" width="1" height="1" fill="#000"/><rect x="2" y="14" width="1" height="1" fill="#000"/><rect x="0" y="15" width="1" height="1" fill="#fff"/><rect x="2" y="15" width="1" height="1" fill="#fff"/><rect x="0" y="16" width="1" height="1" fill="#000"/><rect x="2" y="16" width="1" height="1" fill="#000"/><rect x="0" y="17" width="1" height="1" fill="#fff"/><rect x="2" y="17" width="1" height="1" fill="#fff"/><rect x="0" y="18" width="1" height="1" fill="#000"/><rect x="2" y="18" width="1" height="1" fill="#000"/><rect x="0" y="19" width="1" height="1" fill="#fff"/><rect x="2" y="19" width="1" height="1" fill="#fff"/></svg>
<div class="a" style="left:396.5px;top:106.5px;width:19px;height:19px;border-radius:50%;background:radial-gradient(circle,rgba(255,255,255,0.85) 0,rgba(255,255,255,0.35) 35%,rgba(255,255,255,0) 60%),conic-gradient(#f8e070 0deg,#f4b020 70deg,#e82a3a 120deg,#a03ac0 170deg,#3a6ae8 230deg,#3aa0e0 260deg,#5ab84a 300deg,#f8e070 360deg);box-shadow:0 0 0 1px #d8d8d8"></div>
<div class="a" style="left:421px;top:104px;width:248px;height:23px;background:#ffffff;"></div>
<div class="a" style="left:428px;top:109px;width:108px;height:13px;background:#fff;border:1px solid #000"></div>
<div class="t" style="left:539px;top:108px;font-size:14.2px;color:#000;">BYLAYER</div>
<svg style="left:655px;top:113px" width="10" height="6" viewBox="0 0 10 6"><path d="M0.5 0.5l4.5 4.5 4.5-4.5" stroke="#333" stroke-width="1.1" fill="none"/></svg>
<div class="a" style="left:674px;top:106px;width:1px;height:20px;background:#e8e8e8;"></div>
<div class="a" style="left:680px;top:104px;width:248px;height:23px;background:#ffffff;"></div>
<div class="a" style="left:686px;top:115px;width:108px;height:1px;background:#000;"></div>
<div class="t" style="left:797px;top:108px;font-size:14.2px;color:#000;">BYLAYER</div>
<svg style="left:914px;top:113px" width="10" height="6" viewBox="0 0 10 6"><path d="M0.5 0.5l4.5 4.5 4.5-4.5" stroke="#333" stroke-width="1.1" fill="none"/></svg>
<div class="a" style="left:933px;top:106px;width:1px;height:20px;background:#e8e8e8;"></div>
<div class="a" style="left:938px;top:104px;width:249px;height:23px;background:#ffffff;"></div>
<div class="a" style="left:945px;top:115px;width:108px;height:1px;background:#000;"></div>
<div class="t" style="left:1056px;top:108px;font-size:14.2px;color:#000;">BYLAYER</div>
<svg style="left:1173px;top:113px" width="10" height="6" viewBox="0 0 10 6"><path d="M0.5 0.5l4.5 4.5 4.5-4.5" stroke="#333" stroke-width="1.1" fill="none"/></svg>
<div class="a" style="left:1192px;top:106px;width:1px;height:20px;background:#e8e8e8;"></div>
<div class="a" style="left:1197px;top:103px;width:125px;height:25px;background:#ffffff;"></div>
<div class="a" style="left:1200px;top:106px;width:98px;height:19px;background:#c9c9c9;"></div>
<div class="t" style="left:1203px;top:108px;font-size:14.2px;color:#8a8a8a;letter-spacing:-0.55px">BYCOLOR</div>
<svg style="left:1306px;top:113px" width="10" height="6" viewBox="0 0 10 6"><path d="M0.5 0.5l4.5 4.5 4.5-4.5" stroke="#aaa" stroke-width="1.1" fill="none"/></svg>
<div class="a" style="left:0px;top:133px;width:32px;height:553px;background:#616161;"></div>
<svg style="left:5px;top:136px" width="20" height="4" viewBox="0 0 20 4" shape-rendering="crispEdges"><rect x="0" y="0" width="1" height="1" fill="#000"/><rect x="0" y="1" width="1" height="1" fill="#fff"/><rect x="0" y="2" width="1" height="1" fill="#000"/><rect x="0" y="3" width="1" height="1" fill="#fff"/><rect x="2" y="0" width="1" height="1" fill="#000"/><rect x="2" y="1" width="1" height="1" fill="#fff"/><rect x="2" y="2" width="1" height="1" fill="#000"/><rect x="2" y="3" width="1" height="1" fill="#fff"/><rect x="4" y="0" width="1" height="1" fill="#000"/><rect x="4" y="1" width="1" height="1" fill="#fff"/><rect x="4" y="2" width="1" height="1" fill="#000"/><rect x="4" y="3" width="1" height="1" fill="#fff"/><rect x="6" y="0" width="1" height="1" fill="#000"/><rect x="6" y="1" width="1" height="1" fill="#fff"/><rect x="6" y="2" width="1" height="1" fill="#000"/><rect x="6" y="3" width="1" height="1" fill="#fff"/><rect x="8" y="0" width="1" height="1" fill="#000"/><rect x="8" y="1" width="1" height="1" fill="#fff"/><rect x="8" y="2" width="1" height="1" fill="#000"/><rect x="8" y="3" width="1" height="1" fill="#fff"/><rect x="10" y="0" width="1" height="1" fill="#000"/><rect x="10" y="1" width="1" height="1" fill="#fff"/><rect x="10" y="2" width="1" height="1" fill="#000"/><rect x="10" y="3" width="1" height="1" fill="#fff"/><rect x="12" y="0" width="1" height="1" fill="#000"/><rect x="12" y="1" width="1" height="1" fill="#fff"/><rect x="12" y="2" width="1" height="1" fill="#000"/><rect x="12" y="3" width="1" height="1" fill="#fff"/><rect x="14" y="0" width="1" height="1" fill="#000"/><rect x="14" y="1" width="1" height="1" fill="#fff"/><rect x="14" y="2" width="1" height="1" fill="#000"/><rect x="14" y="3" width="1" height="1" fill="#fff"/><rect x="16" y="0" width="1" height="1" fill="#000"/><rect x="16" y="1" width="1" height="1" fill="#fff"/><rect x="16" y="2" width="1" height="1" fill="#000"/><rect x="16" y="3" width="1" height="1" fill="#fff"/><rect x="18" y="0" width="1" height="1" fill="#000"/><rect x="18" y="1" width="1" height="1" fill="#fff"/><rect x="18" y="2" width="1" height="1" fill="#000"/><rect x="18" y="3" width="1" height="1" fill="#fff"/></svg>
<svg style="left:6px;top:146px" width="20" height="20" viewBox="0 0 20 20"><path d="M3 17L17 3" stroke="#e6e6e6" stroke-width="1.3"/><rect x="1.2" y="15.2" width="3.6" height="3.6" fill="#5a9af0" stroke="#2a4a8a" stroke-width="0.6"/><rect x="15.2" y="1.2" width="3.6" height="3.6" fill="#5a9af0" stroke="#2a4a8a" stroke-width="0.6"/></svg>
<svg style="left:6px;top:174px" width="20" height="20" viewBox="0 0 20 20"><path d="M2 18L18 2" stroke="#e6e6e6" stroke-width="1.2"/><path d="M1 19l1-4 3 3zM19 1l-1 4-3-3z" fill="#eee"/><rect x="8.2" y="8.2" width="3.6" height="3.6" fill="#5a9af0" stroke="#2a4a8a" stroke-width="0.6"/></svg>
<svg style="left:6px;top:202px" width="20" height="20" viewBox="0 0 20 20"><path d="M7 5C2 5 1 15 7 15h10" stroke="#e6e6e6" stroke-width="1.3" fill="none"/><rect x="5.2" y="3.2" width="3.6" height="3.6" fill="#5a9af0" stroke="#2a4a8a" stroke-width="0.6"/><rect x="5.2" y="13.2" width="3.6" height="3.6" fill="#5a9af0" stroke="#2a4a8a" stroke-width="0.6"/><rect x="15.2" y="13.2" width="3.6" height="3.6" fill="#5a9af0" stroke="#2a4a8a" stroke-width="0.6"/></svg>
<svg style="left:6px;top:230px" width="20" height="20" viewBox="0 0 20 20"><path d="M10 1l9 6-3 11h-12l-3-11z" stroke="#e6e6e6" stroke-width="1.3" fill="none"/><path d="M10 8v4M8 10h4" stroke="#5a9af0" stroke-width="1"/><rect x="2.2" y="16.2" width="3.6" height="3.6" fill="#5a9af0" stroke="#2a4a8a" stroke-width="0.6"/></svg>
<svg style="left:6px;top:258px" width="20" height="20" viewBox="0 0 20 20"><defs><linearGradient id="gr" x1="0" y1="0" x2="0" y2="1"><stop offset="0" stop-color="#fff"/><stop offset="1" stop-color="#a8c0e8"/></linearGradient></defs><rect x="2" y="4" width="16" height="11" fill="url(#gr)"/><rect x="0.19999999999999996" y="13.2" width="3.6" height="3.6" fill="#5a9af0" stroke="#2a4a8a" stroke-width="0.6"/><rect x="16.2" y="2.2" width="3.6" height="3.6" fill="#5a9af0" stroke="#2a4a8a" stroke-width="0.6"/></svg>
<svg style="left:6px;top:286px" width="20" height="20" viewBox="0 0 20 20"><path d="M2 18C3 8 10 4 18 3" stroke="#e6e6e6" stroke-width="1.2" fill="none"/><rect x="0.19999999999999996" y="16.2" width="3.6" height="3.6" fill="#5a9af0" stroke="#2a4a8a" stroke-width="0.6"/><rect x="5.2" y="5.2" width="3.6" height="3.6" fill="#5a9af0" stroke="#2a4a8a" stroke-width="0.6"/><rect x="16.2" y="1.2" width="3.6" height="3.6" fill="#5a9af0" stroke="#2a4a8a" stroke-width="0.6"/><path d="M20 16v4h-4z" fill="#111"/></svg>
<svg style="left:6px;top:314px" width="20" height="20" viewBox="0 0 20 20"><circle cx="10" cy="10" r="8" fill="#f4f4f4" stroke="#1a2a3a" stroke-width="2"/><path d="M10 10l6-6" stroke="#3a7ad0" stroke-width="1.3"/><rect x="14.2" y="2.2" width="3.6" height="3.6" fill="#5a9af0" stroke="#2a4a8a" stroke-width="0.6"/><path d="M20 16v4h-4z" fill="#111"/></svg>
<svg style="left:6px;top:342px" width="20" height="20" viewBox="0 0 20 20"><defs><linearGradient id="cg" x1="0" y1="0" x2="1" y2="1"><stop offset="0" stop-color="#ffffff"/><stop offset="1" stop-color="#b8cce8"/></linearGradient></defs><path d="M4 6C4 2 9 1 10.5 3.5C13 1 18 3 16.5 7C19.5 9 19 14 16 14.5C16.5 18.5 11 19.5 9.5 16.5C6.5 19 2 17 3 13C0 11.5 0.5 6.5 4 6z" fill="url(#cg)" stroke="#1a2a3a" stroke-width="1.6"/></svg>
<svg style="left:6px;top:370px" width="20" height="20" viewBox="0 0 20 20"><path d="M3 18C3 10 8 13 11 12s6-3 6-9" stroke="#e6e6e6" stroke-width="1.3" fill="none"/><rect x="1.2" y="16.2" width="3.6" height="3.6" fill="#5a9af0" stroke="#2a4a8a" stroke-width="0.6"/><rect x="15.2" y="1.2" width="3.6" height="3.6" fill="#5a9af0" stroke="#2a4a8a" stroke-width="0.6"/></svg>
<svg style="left:6px;top:398px" width="20" height="20" viewBox="0 0 20 20"><ellipse cx="10" cy="10" rx="9" ry="6" fill="#f4f4f4" stroke="#1a2a3a" stroke-width="1.6"/><rect x="8.2" y="2.2" width="3.6" height="3.6" fill="#5a9af0" stroke="#2a4a8a" stroke-width="0.6"/><rect x="0.19999999999999996" y="8.2" width="3.6" height="3.6" fill="#5a9af0" stroke="#2a4a8a" stroke-width="0.6"/><rect x="16.2" y="8.2" width="3.6" height="3.6" fill="#5a9af0" stroke="#2a4a8a" stroke-width="0.6"/><path d="M20 16v4h-4z" fill="#111"/></svg>
<svg style="left:6px;top:426px" width="20" height="20" viewBox="0 0 20 20"><path d="M2 10C2 3 18 3 18 10" stroke="#e6e6e6" stroke-width="1.2" fill="none"/><rect x="0.19999999999999996" y="8.2" width="3.6" height="3.6" fill="#5a9af0" stroke="#2a4a8a" stroke-width="0.6"/><rect x="16.2" y="8.2" width="3.6" height="3.6" fill="#5a9af0" stroke="#2a4a8a" stroke-width="0.6"/><rect x="8.2" y="11.2" width="3.6" height="3.6" fill="#5a9af0" stroke="#2a4a8a" stroke-width="0.6"/><path d="M20 16v4h-4z" fill="#111"/></svg>
<svg style="left:6px;top:454px" width="20" height="20" viewBox="0 0 20 20"><rect x="2" y="6" width="13" height="10" fill="#e8f0f8" stroke="#1a2a3a" stroke-width="1.2"/><circle cx="14" cy="14" r="4.5" fill="#e8e8e8" stroke="#1a2a3a" stroke-width="1.2"/><path d="M6 0v10M1 5h10M2.5 1.5l7 7M9.5 1.5l-7 7" stroke="#f8a800" stroke-width="1.6"/><rect x="0.19999999999999996" y="14.2" width="3.6" height="3.6" fill="#5a9af0" stroke="#2a4a8a" stroke-width="0.6"/></svg>
<svg style="left:6px;top:482px" width="20" height="20" viewBox="0 0 20 20"><rect x="2" y="3" width="13" height="10" fill="#e8f0f8" stroke="#1a2a3a" stroke-width="1.2"/><circle cx="14" cy="12" r="4.5" fill="#e8e8e8" stroke="#1a2a3a" stroke-width="1.2"/><rect x="0.19999999999999996" y="11.2" width="3.6" height="3.6" fill="#5a9af0" stroke="#2a4a8a" stroke-width="0.6"/></svg>
<svg style="left:6px;top:510px" width="20" height="20" viewBox="0 0 20 20"><rect x="8" y="8" width="4" height="4" fill="#ddd" stroke="#333" stroke-width="0.8"/></svg>
<svg style="left:6px;top:538px" width="20" height="20" viewBox="0 0 20 20"><rect x="3" y="3" width="14" height="14" fill="#8ab0e8"/><path d="M3 10l7-7M3 17l14-14M10 17l7-7" stroke="#fff" stroke-width="1.3"/><path d="M0 17h20M17 0v20M3 0v20M0 3h20" stroke="#eee" stroke-width="0.8"/></svg>
<svg style="left:6px;top:566px" width="20" height="20" viewBox="0 0 20 20"><path d="M0 17h20M17 0v20M3 3v17" stroke="#eee" stroke-width="0.8"/><path d="M6 7h9v9h-12v-6z" fill="#8ab0e8" stroke="#1a2a3a" stroke-width="1"/><rect x="1.2" y="1.2" width="3.6" height="3.6" fill="#5a9af0" stroke="#2a4a8a" stroke-width="0.6"/></svg>
<svg style="left:6px;top:594px" width="20" height="20" viewBox="0 0 20 20"><rect x="1" y="1" width="11" height="11" fill="#3a7ad0" stroke="#111" stroke-width="1.5"/><rect x="4" y="4" width="4" height="4" fill="#222"/><circle cx="14" cy="14" r="5.5" fill="#f4f4f4" stroke="#111" stroke-width="1.3"/></svg>
<svg style="left:6px;top:622px" width="20" height="20" viewBox="0 0 20 20"><rect x="1" y="2" width="18" height="16" rx="1" fill="#c8c8c8" stroke="#1a2a3a" stroke-width="1.2"/><rect x="1" y="2" width="18" height="4" fill="#3a5a9a"/><path d="M1 10h18M1 14h18" stroke="#fff" stroke-width="1"/></svg>
<svg style="left:6px;top:650px" width="20" height="20" viewBox="0 0 20 20"><path d="M3 19L10 1l7 18M5.5 12h9" stroke="#e6e6e6" stroke-width="1.5" fill="none"/><path d="M20 16v4h-4z" fill="#111"/></svg>
<div class="a" style="left:32px;top:133px;width:32px;height:814px;background:#5b5b5b;"></div>
<div class="a" style="left:33px;top:139px;width:28px;height:803px;background:linear-gradient(90deg,#707070 0,#9c9c9c 22%,#8c8c8c 50%,#767676 85%,#6a6a6a 100%);border:1px solid #464646;border-radius:3px 3px 0 0"></div>
<svg style="left:37px;top:141px" width="20" height="4" viewBox="0 0 20 4" shape-rendering="crispEdges"><rect x="0" y="0" width="1" height="1" fill="#000"/><rect x="0" y="1" width="1" height="1" fill="#fff"/><rect x="0" y="2" width="1" height="1" fill="#000"/><rect x="0" y="3" width="1" height="1" fill="#fff"/><rect x="2" y="0" width="1" height="1" fill="#000"/><rect x="2" y="1" width="1" height="1" fill="#fff"/><rect x="2" y="2" width="1" height="1" fill="#000"/><rect x="2" y="3" width="1" height="1" fill="#fff"/><rect x="4" y="0" width="1" height="1" fill="#000"/><rect x="4" y="1" width="1" height="1" fill="#fff"/><rect x="4" y="2" width="1" height="1" fill="#000"/><rect x="4" y="3" width="1" height="1" fill="#fff"/><rect x="6" y="0" width="1" height="1" fill="#000"/><rect x="6" y="1" width="1" height="1" fill="#fff"/><rect x="6" y="2" width="1" height="1" fill="#000"/><rect x="6" y="3" width="1" height="1" fill="#fff"/><rect x="8" y="0" width="1" height="1" fill="#000"/><rect x="8" y="1" width="1" height="1" fill="#fff"/><rect x="8" y="2" width="1" height="1" fill="#000"/><rect x="8" y="3" width="1" height="1" fill="#fff"/><rect x="10" y="0" width="1" height="1" fill="#000"/><rect x="10" y="1" width="1" height="1" fill="#fff"/><rect x="10" y="2" width="1" height="1" fill="#000"/><rect x="10" y="3" width="1" height="1" fill="#fff"/><rect x="12" y="0" width="1" height="1" fill="#000"/><rect x="12" y="1" width="1" height="1" fill="#fff"/><rect x="12" y="2" width="1" height="1" fill="#000"/><rect x="12" y="3" width="1" height="1" fill="#fff"/><rect x="14" y="0" width="1" height="1" fill="#000"/><rect x="14" y="1" width="1" height="1" fill="#fff"/><rect x="14" y="2" width="1" height="1" fill="#000"/><rect x="14" y="3" width="1" height="1" fill="#fff"/><rect x="16" y="0" width="1" height="1" fill="#000"/><rect x="16" y="1" width="1" height="1" fill="#fff"/><rect x="16" y="2" width="1" height="1" fill="#000"/><rect x="16" y="3" width="1" height="1" fill="#fff"/><rect x="18" y="0" width="1" height="1" fill="#000"/><rect x="18" y="1" width="1" height="1" fill="#fff"/><rect x="18" y="2" width="1" height="1" fill="#000"/><rect x="18" y="3" width="1" height="1" fill="#fff"/></svg>
<div class="t" style="left:37.5px;top:595px;font-size:17.2px;color:#f0f0f0;transform:rotate(-90deg);transform-origin:0 0">WŁASNOŚCI</div>
<div class="a" style="left:66px;top:135px;width:136px;height:28px;background:linear-gradient(#767676,#5c5c5c);border:2px solid #dedede;border-bottom:none"></div>
<div class="t" style="left:72px;top:143px;font-size:13.5px;color:#ffffff;font-weight:bold">Rysunek1.dwg</div>
<svg style="left:179px;top:143px" width="11" height="11" viewBox="0 0 11 11"><path d="M1 1l9 9M10 1l-9 9" stroke="#e8e8e8" stroke-width="1.8"/></svg>
<svg style="left:1829px;top:141px" width="9" height="12" viewBox="0 0 9 12"><path d="M8 0.5v11l-7-5.5z" fill="none" stroke="#bdbdbd" stroke-width="1.3"/></svg>
<svg style="left:1849px;top:141px" width="9" height="12" viewBox="0 0 9 12"><path d="M1 0.5v11l7-5.5z" fill="none" stroke="#bdbdbd" stroke-width="1.3"/></svg>
<div class="a" style="left:67px;top:164px;width:1796px;height:757px;background:#a2a2a2;"></div>
<div class="a" style="left:1861px;top:164px;width:2px;height:757px;background:#f4f4f4;"></div>
<svg style="left:69px;top:166px" width="1792" height="755" viewBox="69 166 1792 755" shape-rendering="crispEdges"><rect x="69" y="166" width="1792" height="755" fill="#212830"/><rect x="69" y="874" width="1792" height="1" fill="#262c36"/><rect x="69" y="850" width="1792" height="1" fill="#262c36"/><rect x="69" y="826" width="1792" height="1" fill="#262c36"/><rect x="69" y="802" width="1792" height="1" fill="#262c36"/><rect x="69" y="755" width="1792" height="1" fill="#262c36"/><rect x="69" y="731" width="1792" height="1" fill="#262c36"/><rect x="69" y="707" width="1792" height="1" fill="#262c36"/><rect x="69" y="683" width="1792" height="1" fill="#262c36"/><rect x="69" y="635" width="1792" height="1" fill="#262c36"/><rect x="69" y="611" width="1792" height="1" fill="#262c36"/><rect x="69" y="587" width="1792" height="1" fill="#262c36"/><rect x="69" y="563" width="1792" height="1" fill="#262c36"/><rect x="69" y="516" width="1792" height="1" fill="#262c36"/><rect x="69" y="492" width="1792" height="1" fill="#262c36"/><rect x="69" y="468" width="1792" height="1" fill="#262c36"/><rect x="69" y="444" width="1792" height="1" fill="#262c36"/><rect x="69" y="396" width="1792" height="1" fill="#262c36"/><rect x="69" y="372" width="1792" height="1" fill="#262c36"/><rect x="69" y="348" width="1792" height="1" fill="#262c36"/><rect x="69" y="324" width="1792" height="1" fill="#262c36"/><rect x="69" y="277" width="1792" height="1" fill="#262c36"/><rect x="69" y="253" width="1792" height="1" fill="#262c36"/><rect x="69" y="229" width="1792" height="1" fill="#262c36"/><rect x="69" y="205" width="1792" height="1" fill="#262c36"/><rect x="69" y="898" width="1792" height="1" fill="#393e51"/><rect x="69" y="778" width="1792" height="1" fill="#393e51"/><rect x="69" y="659" width="1792" height="1" fill="#393e51"/><rect x="69" y="539" width="1792" height="1" fill="#393e51"/><rect x="69" y="420" width="1792" height="1" fill="#393e51"/><rect x="69" y="300" width="1792" height="1" fill="#393e51"/><rect x="69" y="181" width="1792" height="1" fill="#393e51"/><rect x="72" y="166" width="1" height="755" fill="#262c36"/><rect x="96" y="166" width="1" height="755" fill="#262c36"/><rect x="120" y="166" width="1" height="755" fill="#262c36"/><rect x="144" y="166" width="1" height="755" fill="#262c36"/><rect x="192" y="166" width="1" height="755" fill="#262c36"/><rect x="216" y="166" width="1" height="755" fill="#262c36"/><rect x="240" y="166" width="1" height="755" fill="#262c36"/><rect x="264" y="166" width="1" height="755" fill="#262c36"/><rect x="311" y="166" width="1" height="755" fill="#262c36"/><rect x="335" y="166" width="1" height="755" fill="#262c36"/><rect x="359" y="166" width="1" height="755" fill="#262c36"/><rect x="383" y="166" width="1" height="755" fill="#262c36"/><rect x="431" y="166" width="1" height="755" fill="#262c36"/><rect x="455" y="166" width="1" height="755" fill="#262c36"/><rect x="479" y="166" width="1" height="755" fill="#262c36"/><rect x="503" y="166" width="1" height="755" fill="#262c36"/><rect x="550" y="166" width="1" height="755" fill="#262c36"/><rect x="574" y="166" width="1" height="755" fill="#262c36"/><rect x="598" y="166" width="1" height="755" fill="#262c36"/><rect x="622" y="166" width="1" height="755" fill="#262c36"/><rect x="670" y="166" width="1" height="755" fill="#262c36"/><rect x="694" y="166" width="1" height="755" fill="#262c36"/><rect x="718" y="166" width="1" height="755" fill="#262c36"/><rect x="742" y="166" width="1" height="755" fill="#262c36"/><rect x="790" y="166" width="1" height="755" fill="#262c36"/><rect x="813" y="166" width="1" height="755" fill="#262c36"/><rect x="837" y="166" width="1" height="755" fill="#262c36"/><rect x="861" y="166" width="1" height="755" fill="#262c36"/><rect x="909" y="166" width="1" height="755" fill="#262c36"/><rect x="933" y="166" width="1" height="755" fill="#262c36"/><rect x="957" y="166" width="1" height="755" fill="#262c36"/><rect x="981" y="166" width="1" height="755" fill="#262c36"/><rect x="1029" y="166" width="1" height="755" fill="#262c36"/><rect x="1053" y="166" width="1" height="755" fill="#262c36"/><rect x="1076" y="166" width="1" height="755" fill="#262c36"/><rect x="1100" y="166" width="1" height="755" fill="#262c36"/><rect x="1148" y="166" width="1" height="755" fill="#262c36"/><rect x="1172" y="166" width="1" height="755" fill="#262c36"/><rect x="1196" y="166" width="1" height="755" fill="#262c36"/><rect x="1220" y="166" width="1" height="755" fill="#262c36"/><rect x="1268" y="166" width="1" height="755" fill="#262c36"/><rect x="1292" y="166" width="1" height="755" fill="#262c36"/><rect x="1316" y="166" width="1" height="755" fill="#262c36"/><rect x="1339" y="166" width="1" height="755" fill="#262c36"/><rect x="1387" y="166" width="1" height="755" fill="#262c36"/><rect x="1411" y="166" width="1" height="755" fill="#262c36"/><rect x="1435" y="166" width="1" height="755" fill="#262c36"/><rect x="1459" y="166" width="1" height="755" fill="#262c36"/><rect x="1507" y="166" width="1" height="755" fill="#262c36"/><rect x="1531" y="166" width="1" height="755" fill="#262c36"/><rect x="1555" y="166" width="1" height="755" fill="#262c36"/><rect x="1579" y="166" width="1" height="755" fill="#262c36"/><rect x="1626" y="166" width="1" height="755" fill="#262c36"/><rect x="1650" y="166" width="1" height="755" fill="#262c36"/><rect x="1674" y="166" width="1" height="755" fill="#262c36"/><rect x="1698" y="166" width="1" height="755" fill="#262c36"/><rect x="1746" y="166" width="1" height="755" fill="#262c36"/><rect x="1770" y="166" width="1" height="755" fill="#262c36"/><rect x="1794" y="166" width="1" height="755" fill="#262c36"/><rect x="1818" y="166" width="1" height="755" fill="#262c36"/><rect x="168" y="166" width="1" height="755" fill="#393e51"/><rect x="288" y="166" width="1" height="755" fill="#393e51"/><rect x="407" y="166" width="1" height="755" fill="#393e51"/><rect x="527" y="166" width="1" height="755" fill="#393e51"/><rect x="646" y="166" width="1" height="755" fill="#393e51"/><rect x="766" y="166" width="1" height="755" fill="#393e51"/><rect x="885" y="166" width="1" height="755" fill="#393e51"/><rect x="1005" y="166" width="1" height="755" fill="#393e51"/><rect x="1124" y="166" width="1" height="755" fill="#393e51"/><rect x="1244" y="166" width="1" height="755" fill="#393e51"/><rect x="1363" y="166" width="1" height="755" fill="#393e51"/><rect x="1483" y="166" width="1" height="755" fill="#393e51"/><rect x="1602" y="166" width="1" height="755" fill="#393e51"/><rect x="1722" y="166" width="1" height="755" fill="#393e51"/><rect x="1841" y="166" width="1" height="755" fill="#393e51"/><rect x="407" y="166" width="1" height="648" fill="#1f9f1f"/><rect x="407" y="813" width="1" height="86" fill="#ffffff"/><rect x="407" y="898" width="85" height="1" fill="#ffffff"/><rect x="492" y="898" width="1369" height="1" fill="#c81e1e"/><rect x="400" y="891" width="15" height="1" fill="#fff"/><rect x="400" y="905" width="15" height="1" fill="#fff"/><rect x="400" y="891" width="1" height="15" fill="#fff"/><rect x="414" y="891" width="1" height="15" fill="#fff"/></svg>
<svg style="left:411px;top:813px" width="16" height="16" viewBox="0 0 16 16"><path d="M1 1l7 7 7-7M8 8v8" stroke="#f0f0f0" stroke-width="1.1" fill="none"/></svg>
<svg style="left:478px;top:879px" width="16" height="16" viewBox="0 0 16 16"><path d="M1 1l14 14M15 1l-14 14" stroke="#f0f0f0" stroke-width="1.1" fill="none"/></svg>
<div class="a" style="left:67px;top:921px;width:1796px;height:20px;background:#f2f2f2;"></div>
<div class="a" style="left:67px;top:941px;width:1796px;height:1px;background:#b8b8b8;"></div>
<div class="a" style="left:67px;top:942px;width:1796px;height:3px;background:#ffffff;"></div>
<div class="a" style="left:67px;top:921px;width:2px;height:21px;background:#888;"></div>
<div class="a" style="left:69px;top:921px;width:19px;height:20px;background:#f0f0f0;border:2px solid #a8a8a8;border-top:none"></div>
<div class="a" style="left:88px;top:921px;width:19px;height:20px;background:#f0f0f0;border:2px solid #a8a8a8;border-top:none"></div>
<div class="a" style="left:109px;top:921px;width:19px;height:20px;background:#f0f0f0;border:2px solid #a8a8a8;border-top:none"></div>
<div class="a" style="left:129px;top:921px;width:19px;height:20px;background:#f0f0f0;border:2px solid #a8a8a8;border-top:none"></div>
<svg style="left:73px;top:925px" width="11" height="11" viewBox="0 0 11 11"><rect x="0" y="0" width="2" height="11" fill="#000"/><path d="M10 0v11l-7-5.5z" fill="#000"/></svg>
<svg style="left:93px;top:925px" width="9" height="11" viewBox="0 0 9 11"><path d="M8 0v11l-7-5.5z" fill="#000"/></svg>
<svg style="left:114px;top:925px" width="9" height="11" viewBox="0 0 9 11"><path d="M1 0v11l7-5.5z" fill="#000"/></svg>
<svg style="left:133px;top:925px" width="11" height="11" viewBox="0 0 11 11"><path d="M0 0v11l7-5.5z" fill="#000"/><rect x="8" y="0" width="2" height="11" fill="#000"/></svg>
<svg style="left:150px;top:921px" width="210" height="22" viewBox="0 0 210 22"><path d="M67 0.5L64 10.5L68.5 20.5H125.5L128.5 10.5L126 0.5z" fill="#ececec" stroke="#111" stroke-width="1"/><path d="M126.5 0.5L135 20.5H191.5L198.5 0.5" fill="#ececec" stroke="#111" stroke-width="1"/><path d="M3.5 0L12 20.5H59.5L67.5 0z" fill="#ffffff" stroke="#111" stroke-width="1"/><path d="M12.5 20.5H59" stroke="#fff" stroke-width="1.2"/></svg>
<div class="t" style="left:164px;top:924.5px;font-size:14.8px;color:#000;font-weight:bold">Model</div>
<div class="t" style="left:224px;top:925px;font-size:14.4px;color:#1a1a48;">Układ1</div>
<div class="t" style="left:290px;top:925px;font-size:14.4px;color:#1a1a48;">Układ2</div>
<div class="a" style="left:1866px;top:133px;width:34px;height:724px;background:#616161;"></div>
<svg style="left:1872px;top:136px" width="20" height="4" viewBox="0 0 20 4" shape-rendering="crispEdges"><rect x="0" y="0" width="1" height="1" fill="#000"/><rect x="0" y="1" width="1" height="1" fill="#fff"/><rect x="0" y="2" width="1" height="1" fill="#000"/><rect x="0" y="3" width="1" height="1" fill="#fff"/><rect x="2" y="0" width="1" height="1" fill="#000"/><rect x="2" y="1" width="1" height="1" fill="#fff"/><rect x="2" y="2" width="1" height="1" fill="#000"/><rect x="2" y="3" width="1" height="1" fill="#fff"/><rect x="4" y="0" width="1" height="1" fill="#000"/><rect x="4" y="1" width="1" height="1" fill="#fff"/><rect x="4" y="2" width="1" height="1" fill="#000"/><rect x="4" y="3" width="1" height="1" fill="#fff"/><rect x="6" y="0" width="1" height="1" fill="#000"/><rect x="6" y="1" width="1" height="1" fill="#fff"/><rect x="6" y="2" width="1" height="1" fill="#000"/><rect x="6" y="3" width="1" height="1" fill="#fff"/><rect x="8" y="0" width="1" height="1" fill="#000"/><rect x="8" y="1" width="1" height="1" fill="#fff"/><rect x="8" y="2" width="1" height="1" fill="#000"/><rect x="8" y="3" width="1" height="1" fill="#fff"/><rect x="10" y="0" width="1" height="1" fill="#000"/><rect x="10" y="1" width="1" height="1" fill="#fff"/><rect x="10" y="2" width="1" height="1" fill="#000"/><rect x="10" y="3" width="1" height="1" fill="#fff"/><rect x="12" y="0" width="1" height="1" fill="#000"/><rect x="12" y="1" width="1" height="1" fill="#fff"/><rect x="12" y="2" width="1" height="1" fill="#000"/><rect x="12" y="3" width="1" height="1" fill="#fff"/><rect x="14" y="0" width="1" height="1" fill="#000"/><rect x="14" y="1" width="1" height="1" fill="#fff"/><rect x="14" y="2" width="1" height="1" fill="#000"/><rect x="14" y="3" width="1" height="1" fill="#fff"/><rect x="16" y="0" width="1" height="1" fill="#000"/><rect x="16" y="1" width="1" height="1" fill="#fff"/><rect x="16" y="2" width="1" height="1" fill="#000"/><rect x="16" y="3" width="1" height="1" fill="#fff"/><rect x="18" y="0" width="1" height="1" fill="#000"/><rect x="18" y="1" width="1" height="1" fill="#fff"/><rect x="18" y="2" width="1" height="1" fill="#000"/><rect x="18" y="3" width="1" height="1" fill="#fff"/></svg>
<svg style="left:1874px;top:146px" width="20" height="20" viewBox="0 0 20 20"><path d="M1 18L19 1" stroke="#e6e6e6" stroke-width="1.3"/><path d="M9.5 9.5l9 9" stroke="#f0a020" stroke-width="5" stroke-linecap="butt"/><circle cx="9.5" cy="8.5" r="3" fill="#e82a2a"/></svg>
<svg style="left:1874px;top:174px" width="20" height="20" viewBox="0 0 20 20"><rect x="1" y="1" width="8" height="7" fill="#eef4fa"/><path d="M11 3h4v3" stroke="#ccc" stroke-width="1" fill="none"/><rect x="7" y="9" width="8" height="6" fill="#e8f0f8" stroke="#1a2a4a" stroke-width="1.5"/><rect x="12" y="12" width="8" height="7" fill="#e8f0f8" stroke="#1a2a4a" stroke-width="1.5"/></svg>
<svg style="left:1874px;top:202px" width="20" height="20" viewBox="0 0 20 20"><defs><linearGradient id="mg" x1="0" y1="0" x2="0" y2="1"><stop offset="0" stop-color="#5a9af0"/><stop offset="1" stop-color="#f4f8ff"/></linearGradient></defs><path d="M8.5 4L1 19H8.5z" fill="url(#mg)"/><path d="M11.5 4L19 19H11.5z" fill="url(#mg)"/><path d="M10 0v20" stroke="#fff" stroke-width="1.4" stroke-dasharray="4 1.5"/></svg>
<svg style="left:1874px;top:230px" width="20" height="20" viewBox="0 0 20 20"><path d="M3 18v-7h5v-4c0-5 9-5 9 0v6" stroke="#5a9af0" stroke-width="1.3" fill="none"/><path d="M5 16v-4h5v-5c0-3 5-3 5 0v6" stroke="#e6e6e6" stroke-width="1.2" fill="none"/></svg>
<svg style="left:1874px;top:258px" width="20" height="20" viewBox="0 0 20 20"><rect x="1" y="2" width="6" height="6" fill="#5a9af0"/><rect x="13" y="2" width="6" height="6" fill="#5a9af0"/><rect x="1" y="12" width="6" height="6" fill="#5a9af0"/><rect x="13" y="12" width="6" height="6" fill="#5a9af0" stroke="#fff" stroke-width="1"/><path d="M7 5h6M4 8v4" stroke="#ccc" stroke-dasharray="1 1"/></svg>
<svg style="left:1874px;top:286px" width="20" height="20" viewBox="0 0 20 20"><path d="M10 1v18M1 10h18" stroke="#f4f4f4" stroke-width="2.2"/></svg>
<svg style="left:1874px;top:314px" width="20" height="20" viewBox="0 0 20 20"><path d="M4 8a7 7 0 1 0 12-3" stroke="#e6e6e6" stroke-width="1.3" fill="none"/><path d="M14 2l3 4-4 1z" fill="#eee"/><path d="M10 9v4M8 11h4" stroke="#d22" stroke-width="1.5"/></svg>
<svg style="left:1874px;top:342px" width="20" height="20" viewBox="0 0 20 20"><rect x="2" y="2" width="16" height="16" fill="none" stroke="#aaa" stroke-width="1" stroke-dasharray="2 1.5"/><rect x="3" y="9" width="8" height="8" fill="#a8c8f0" stroke="#eee" stroke-width="1"/></svg>
<svg style="left:1874px;top:370px" width="20" height="20" viewBox="0 0 20 20"><path d="M3 2h7l8 16h-15z" fill="#fff"/><path d="M10 2l8 16h-8z" fill="#bbb"/><rect x="3" y="2" width="7" height="16" fill="none" stroke="#1a2a3a" stroke-width="1.3"/></svg>
<svg style="left:1874px;top:398px" width="20" height="20" viewBox="0 0 20 20"><rect x="2" y="6" width="14" height="9" fill="none" stroke="#5a9af0" stroke-width="1.8"/><path d="M10 1v19" stroke="#eee" stroke-width="1.2"/><rect x="12" y="6" width="6" height="9" fill="none" stroke="#bbb" stroke-width="1.4"/></svg>
<svg style="left:1874px;top:426px" width="20" height="20" viewBox="0 0 20 20"><path d="M2 19L14 7" stroke="#5a9af0" stroke-width="1.6"/><path d="M8 4l12 8" stroke="#5a9af0" stroke-width="1.6"/><path d="M14 7l3-3" stroke="#ddd" stroke-width="1.3"/></svg>
<svg style="left:1874px;top:454px" width="20" height="20" viewBox="0 0 20 20"><path d="M2 19l9-9" stroke="#5a9af0" stroke-width="1.8"/><path d="M1 13l6-6" stroke="#1a2a3a" stroke-width="2"/><path d="M8 4l12 8" stroke="#ccc" stroke-width="1.6"/></svg>
<svg style="left:1874px;top:482px" width="20" height="20" viewBox="0 0 20 20"><path d="M4 1h10l3 3v15h-13z" fill="#e4ecf8" stroke="#1a2a3a" stroke-width="1.2"/><circle cx="17" cy="12" r="2" fill="#5a9af0"/></svg>
<svg style="left:1874px;top:510px" width="20" height="20" viewBox="0 0 20 20"><path d="M4 1h10l3 3v15h-13z" fill="#e4ecf8" stroke="#1a2a3a" stroke-width="1.2"/><circle cx="17" cy="7" r="2" fill="#5a9af0"/><circle cx="17" cy="14" r="2" fill="#5a9af0"/></svg>
<svg style="left:1874px;top:538px" width="20" height="20" viewBox="0 0 20 20"><path d="M4 1h10l3 3v15h-13z" fill="#e4ecf8" stroke="#1a2a3a" stroke-width="1.2"/><path d="M13 8l5 3-5 3" fill="#5a9af0"/></svg>
<svg style="left:1874px;top:566px" width="20" height="20" viewBox="0 0 20 20"><path d="M2 18L17 3v15z" fill="#e4ecf8" stroke="#1a2a3a" stroke-width="1.2"/><path d="M2 2h14" stroke="#aaa" stroke-dasharray="1 1"/></svg>
<svg style="left:1874px;top:594px" width="20" height="20" viewBox="0 0 20 20"><path d="M2 18C2 9 8 3 17 3v15z" fill="#e4ecf8" stroke="#1a2a3a" stroke-width="1.2"/><path d="M2 2h14" stroke="#aaa" stroke-dasharray="1 1"/></svg>
<svg style="left:1874px;top:622px" width="20" height="20" viewBox="0 0 20 20"><path d="M6 8l12 10" stroke="#d81a1a" stroke-width="4.5"/><path d="M3 5l4 2 2-4" stroke="#f8c800" stroke-width="2" fill="none"/></svg>
<svg style="left:1872px;top:662px" width="20" height="4" viewBox="0 0 20 4" shape-rendering="crispEdges"><rect x="0" y="0" width="1" height="1" fill="#000"/><rect x="0" y="1" width="1" height="1" fill="#fff"/><rect x="0" y="2" width="1" height="1" fill="#000"/><rect x="0" y="3" width="1" height="1" fill="#fff"/><rect x="2" y="0" width="1" height="1" fill="#000"/><rect x="2" y="1" width="1" height="1" fill="#fff"/><rect x="2" y="2" width="1" height="1" fill="#000"/><rect x="2" y="3" width="1" height="1" fill="#fff"/><rect x="4" y="0" width="1" height="1" fill="#000"/><rect x="4" y="1" width="1" height="1" fill="#fff"/><rect x="4" y="2" width="1" height="1" fill="#000"/><rect x="4" y="3" width="1" height="1" fill="#fff"/><rect x="6" y="0" width="1" height="1" fill="#000"/><rect x="6" y="1" width="1" height="1" fill="#fff"/><rect x="6" y="2" width="1" height="1" fill="#000"/><rect x="6" y="3" width="1" height="1" fill="#fff"/><rect x="8" y="0" width="1" height="1" fill="#000"/><rect x="8" y="1" width="1" height="1" fill="#fff"/><rect x="8" y="2" width="1" height="1" fill="#000"/><rect x="8" y="3" width="1" height="1" fill="#fff"/><rect x="10" y="0" width="1" height="1" fill="#000"/><rect x="10" y="1" width="1" height="1" fill="#fff"/><rect x="10" y="2" width="1" height="1" fill="#000"/><rect x="10" y="3" width="1" height="1" fill="#fff"/><rect x="12" y="0" width="1" height="1" fill="#000"/><rect x="12" y="1" width="1" height="1" fill="#fff"/><rect x="12" y="2" width="1" height="1" fill="#000"/><rect x="12" y="3" width="1" height="1" fill="#fff"/><rect x="14" y="0" width="1" height="1" fill="#000"/><rect x="14" y="1" width="1" height="1" fill="#fff"/><rect x="14" y="2" width="1" height="1" fill="#000"/><rect x="14" y="3" width="1" height="1" fill="#fff"/><rect x="16" y="0" width="1" height="1" fill="#000"/><rect x="16" y="1" width="1" height="1" fill="#fff"/><rect x="16" y="2" width="1" height="1" fill="#000"/><rect x="16" y="3" width="1" height="1" fill="#fff"/><rect x="18" y="0" width="1" height="1" fill="#000"/><rect x="18" y="1" width="1" height="1" fill="#fff"/><rect x="18" y="2" width="1" height="1" fill="#000"/><rect x="18" y="3" width="1" height="1" fill="#fff"/></svg>
<svg style="left:1874px;top:672px" width="20" height="20" viewBox="0 0 20 20"><rect x="1" y="1" width="11" height="11" fill="#e8f0f8"/><rect x="5" y="5" width="12" height="12" fill="#6aa8f0" stroke="#1a2a3a" stroke-width="1.2"/><rect x="12" y="12" width="7" height="7" fill="#fff" stroke="#1a2a3a" stroke-width="1.2"/></svg>
<svg style="left:1874px;top:700px" width="20" height="20" viewBox="0 0 20 20"><rect x="1" y="1" width="7" height="7" fill="#fff" stroke="#1a2a3a" stroke-width="1.2"/><rect x="4" y="4" width="12" height="12" fill="#6aa8f0" stroke="#1a2a3a" stroke-width="1.2"/><rect x="11" y="11" width="8" height="8" fill="#fff" stroke="#1a2a3a" stroke-width="1.2"/></svg>
<svg style="left:1874px;top:728px" width="20" height="20" viewBox="0 0 20 20"><rect x="7" y="3" width="12" height="9" fill="#bbb"/><rect x="1" y="9" width="12" height="9" fill="#5a9af0" stroke="#1a2a3a" stroke-width="1"/></svg>
<svg style="left:1874px;top:756px" width="20" height="20" viewBox="0 0 20 20"><rect x="1" y="9" width="12" height="9" fill="#5a9af0" stroke="#1a2a3a" stroke-width="1"/><rect x="7" y="3" width="12" height="9" fill="#bbb"/></svg>
<div class="a" style="left:1873px;top:786px;width:20px;height:1px;background:#e8e8e8;"></div>
<svg style="left:1874px;top:792px" width="20" height="20" viewBox="0 0 20 20"><rect x="1" y="1" width="14" height="12" fill="#6aa8f0" stroke="#1a2a3a" stroke-width="1"/><text x="10" y="19" font-size="8" text-anchor="middle" fill="#fff" font-family="Liberation Sans">ABC</text></svg>
<svg style="left:1874px;top:820px" width="20" height="20" viewBox="0 0 20 20"><rect x="1" y="1" width="14" height="14" fill="#6aa8f0" stroke="#1a2a3a" stroke-width="1"/><rect x="7" y="9" width="12" height="10" fill="none" stroke="#ccc" stroke-dasharray="1 1"/></svg>
<div class="a" style="left:0px;top:948px;width:971px;height:34px;background:#616161;"></div>
<svg style="left:2px;top:955px" width="3" height="20" viewBox="0 0 3 20" shape-rendering="crispEdges"><rect x="0" y="0" width="1" height="1" fill="#000"/><rect x="2" y="0" width="1" height="1" fill="#000"/><rect x="0" y="1" width="1" height="1" fill="#fff"/><rect x="2" y="1" width="1" height="1" fill="#fff"/><rect x="0" y="2" width="1" height="1" fill="#000"/><rect x="2" y="2" width="1" height="1" fill="#000"/><rect x="0" y="3" width="1" height="1" fill="#fff"/><rect x="2" y="3" width="1" height="1" fill="#fff"/><rect x="0" y="4" width="1" height="1" fill="#000"/><rect x="2" y="4" width="1" height="1" fill="#000"/><rect x="0" y="5" width="1" height="1" fill="#fff"/><rect x="2" y="5" width="1" height="1" fill="#fff"/><rect x="0" y="6" width="1" height="1" fill="#000"/><rect x="2" y="6" width="1" height="1" fill="#000"/><rect x="0" y="7" width="1" height="1" fill="#fff"/><rect x="2" y="7" width="1" height="1" fill="#fff"/><rect x="0" y="8" width="1" height="1" fill="#000"/><rect x="2" y="8" width="1" height="1" fill="#000"/><rect x="0" y="9" width="1" height="1" fill="#fff"/><rect x="2" y="9" width="1" height="1" fill="#fff"/><rect x="0" y="10" width="1" height="1" fill="#000"/><rect x="2" y="10" width="1" height="1" fill="#000"/><rect x="0" y="11" width="1" height="1" fill="#fff"/><rect x="2" y="11" width="1" height="1" fill="#fff"/><rect x="0" y="12" width="1" height="1" fill="#000"/><rect x="2" y="12" width="1" height="1" fill="#000"/><rect x="0" y="13" width="1" height="1" fill="#fff"/><rect x="2" y="13" width="1" height="1" fill="#fff"/><rect x="0" y="14" width="1" height="1" fill="#000"/><rect x="2" y="14" width="1" height="1" fill="#000"/><rect x="0" y="15" width="1" height="1" fill="#fff"/><rect x="2" y="15" width="1" height="1" fill="#fff"/><rect x="0" y="16" width="1" height="1" fill="#000"/><rect x="2" y="16" width="1" height="1" fill="#000"/><rect x="0" y="17" width="1" height="1" fill="#fff"/><rect x="2" y="17" width="1" height="1" fill="#fff"/><rect x="0" y="18" width="1" height="1" fill="#000"/><rect x="2" y="18" width="1" height="1" fill="#000"/><rect x="0" y="19" width="1" height="1" fill="#fff"/><rect x="2" y="19" width="1" height="1" fill="#fff"/></svg>
<svg style="left:12px;top:955px" width="20" height="20" viewBox="0 0 20 20"><path d="M7 13h13l-6 5.5h-13z" fill="#3a3a3a"/><path d="M7 12.5h13l-6 5.2h-13z" fill="#fff"/><path d="M1 18h13" stroke="#c8c8c8" stroke-width="0.8"/><path d="M7 8h13l-6 5.5h-13z" fill="#3a3a3a"/><path d="M7 7.5h13l-6 5.2h-13z" fill="#fff"/><path d="M1 13h13" stroke="#c8c8c8" stroke-width="0.8"/><path d="M7 3h13l-6 5.5h-13z" fill="#3a3a3a"/><path d="M7 2.5h13l-6 5.2h-13z" fill="#fff"/><path d="M1 8h13" stroke="#c8c8c8" stroke-width="0.8"/><circle cx="14" cy="4" r="3" fill="#fff" stroke="#222" stroke-width="1"/><path d="M12 6l-6 7" stroke="#222" stroke-width="1"/></svg>
<svg style="left:40px;top:955px" width="20" height="20" viewBox="0 0 20 20"><path d="M7 16h13l-6 5.5h-13z" fill="#3a3a3a"/><path d="M7 15.5h13l-6 5.2h-13z" fill="#fff"/><path d="M1 21h13" stroke="#c8c8c8" stroke-width="0.8"/><path d="M7 11h13l-6 5.5h-13z" fill="#3a3a3a"/><path d="M7 10.5h13l-6 5.2h-13z" fill="#fff"/><path d="M1 16h13" stroke="#c8c8c8" stroke-width="0.8"/><path d="M7 6h13l-6 5.5h-13z" fill="#3a3a3a"/><path d="M7 5.5h13l-6 5.2h-13z" fill="#fff"/><path d="M1 11h13" stroke="#c8c8c8" stroke-width="0.8"/><path d="M3 2h7v6" stroke="#111" stroke-width="2" fill="none"/><path d="M1 2l4-3v6z" fill="#111"/></svg>
<svg style="left:68px;top:955px" width="20" height="20" viewBox="0 0 20 20"><path d="M7 11h13l-6 5.5h-13z" fill="#3a3a3a"/><path d="M7 10.5h13l-6 5.2h-13z" fill="#fff"/><path d="M1 16h13" stroke="#c8c8c8" stroke-width="0.8"/><path d="M7 6h13l-6 5.5h-13z" fill="#3a3a3a"/><path d="M7 5.5h13l-6 5.2h-13z" fill="#fff"/><path d="M1 11h13" stroke="#c8c8c8" stroke-width="0.8"/><path d="M7 1h13l-6 5.5h-13z" fill="#3a3a3a"/><path d="M7 0.5h13l-6 5.2h-13z" fill="#fff"/><path d="M1 6h13" stroke="#c8c8c8" stroke-width="0.8"/><rect x="10" y="12" width="3" height="8" fill="#5a9af0"/><rect x="14" y="11" width="4" height="5" fill="#5a9af0"/></svg>
<div class="a" style="left:96px;top:956px;width:1px;height:18px;background:#e8e8e8;"></div>
<svg style="left:105px;top:955px" width="20" height="20" viewBox="0 0 20 20"><path d="M7 2h13l-6 5.5h-13z" fill="#fff"/><path d="M4 13l5 5 9-8" stroke="#4a8ae8" stroke-width="2" fill="none"/></svg>
<svg style="left:133px;top:955px" width="20" height="20" viewBox="0 0 20 20"><path d="M7 6h13l-6 5.5h-13z" fill="#3a3a3a"/><path d="M7 5.5h13l-6 5.2h-13z" fill="#fff"/><path d="M1 11h13" stroke="#c8c8c8" stroke-width="0.8"/><path d="M7 1h13l-6 5.5h-13z" fill="#3a3a3a"/><path d="M7 0.5h13l-6 5.2h-13z" fill="#fff"/><path d="M1 6h13" stroke="#c8c8c8" stroke-width="0.8"/><path d="M5 16l5-5 5 4-4 5z" fill="#dcbc8a"/><path d="M10 11l4-4 4 3-3 5z" fill="#ccc"/></svg>
<svg style="left:161px;top:955px" width="20" height="20" viewBox="0 0 20 20"><path d="M7 13h13l-6 5.5h-13z" fill="#3a3a3a"/><path d="M7 12.5h13l-6 5.2h-13z" fill="#fff"/><path d="M1 18h13" stroke="#c8c8c8" stroke-width="0.8"/><path d="M7 8h13l-6 5.5h-13z" fill="#3a3a3a"/><path d="M7 7.5h13l-6 5.2h-13z" fill="#fff"/><path d="M1 13h13" stroke="#c8c8c8" stroke-width="0.8"/><path d="M7 3h13l-6 5.5h-13z" fill="#3a3a3a"/><path d="M7 2.5h13l-6 5.2h-13z" fill="#fff"/><path d="M1 8h13" stroke="#c8c8c8" stroke-width="0.8"/><text x="10" y="18.5" font-size="19" font-weight="bold" fill="#ee1111" text-anchor="middle" font-family="Liberation Sans">?</text></svg>
<div class="a" style="left:189px;top:956px;width:1px;height:18px;background:#e8e8e8;"></div>
<svg style="left:198px;top:955px" width="20" height="20" viewBox="0 0 20 20"><path d="M7 6h13l-6 5.5h-13z" fill="#3a3a3a"/><path d="M7 5.5h13l-6 5.2h-13z" fill="#fff"/><path d="M1 11h13" stroke="#c8c8c8" stroke-width="0.8"/><path d="M7 1h13l-6 5.5h-13z" fill="#3a3a3a"/><path d="M7 0.5h13l-6 5.2h-13z" fill="#fff"/><path d="M1 6h13" stroke="#c8c8c8" stroke-width="0.8"/><path d="M5 11h13l-4 5.5h-13z" fill="#6aa8f0"/><path d="M14 20l3-3" stroke="#fff" stroke-width="1"/></svg>
<svg style="left:226px;top:955px" width="20" height="20" viewBox="0 0 20 20"><path d="M7 1h13l-6 5.5h-13z" fill="#3a3a3a"/><path d="M7 0.5h13l-6 5.2h-13z" fill="#fff"/><path d="M1 6h13" stroke="#c8c8c8" stroke-width="0.8"/><path d="M5 7h13l-4 5.5h-13z" fill="#6aa8f0"/><path d="M14 20l4-4" stroke="#fff" stroke-width="1"/></svg>
<svg style="left:254px;top:955px" width="20" height="20" viewBox="0 0 20 20"><path d="M5 2h13l-4 5.5h-13z" fill="#fff"/><circle cx="10" cy="15" r="2.5" fill="#4a8ae8"/><path d="M10 10v10M5 15h10M6.5 11.5l7 7M13.5 11.5l-7 7" stroke="#4a8ae8" stroke-width="1"/></svg>
<svg style="left:282px;top:955px" width="20" height="20" viewBox="0 0 20 20"><path d="M7 11h13l-6 5.5h-13z" fill="#3a3a3a"/><path d="M7 10.5h13l-6 5.2h-13z" fill="#fff"/><path d="M1 16h13" stroke="#c8c8c8" stroke-width="0.8"/><path d="M7 6h13l-6 5.5h-13z" fill="#3a3a3a"/><path d="M7 5.5h13l-6 5.2h-13z" fill="#fff"/><path d="M1 11h13" stroke="#c8c8c8" stroke-width="0.8"/><path d="M7 1h13l-6 5.5h-13z" fill="#3a3a3a"/><path d="M7 0.5h13l-6 5.2h-13z" fill="#fff"/><path d="M1 6h13" stroke="#c8c8c8" stroke-width="0.8"/><circle cx="15" cy="14" r="4.5" fill="#5a9af0"/></svg>
<div class="a" style="left:311px;top:956px;width:1px;height:18px;background:#e8e8e8;"></div>
<svg style="left:320px;top:955px" width="20" height="20" viewBox="0 0 20 20"><path d="M5 2h13l-4 5.5h-13z" fill="#fff"/><circle cx="13" cy="11" r="5" fill="#a8c8e8"/><rect x="11" y="15" width="4" height="5" fill="#888"/></svg>
<div class="a" style="left:347px;top:956px;width:1px;height:18px;background:#e8e8e8;"></div>
<svg style="left:356px;top:955px" width="20" height="20" viewBox="0 0 20 20"><path d="M5 2h13l-4 5.5h-13z" fill="#fff"/><path d="M12 13v-4c0-3 5-3 5 0v4" stroke="#bbb" stroke-width="1.5" fill="none"/><rect x="9" y="12" width="10" height="8" fill="#e8c070"/></svg>
<svg style="left:384px;top:955px" width="20" height="20" viewBox="0 0 20 20"><path d="M5 2h13l-4 5.5h-13z" fill="#fff"/><path d="M15 10v-3c0-3 5-3 5 0" stroke="#bbb" stroke-width="1.5" fill="none"/><rect x="6" y="12" width="9" height="8" fill="#5a8ae0"/></svg>
<div class="a" style="left:413px;top:956px;width:1px;height:18px;background:#e8e8e8;"></div>
<svg style="left:421px;top:955px" width="20" height="20" viewBox="0 0 20 20"><path d="M7 11h13l-6 5.5h-13z" fill="#3a3a3a"/><path d="M7 10.5h13l-6 5.2h-13z" fill="#fff"/><path d="M1 16h13" stroke="#c8c8c8" stroke-width="0.8"/><path d="M7 6h13l-6 5.5h-13z" fill="#3a3a3a"/><path d="M7 5.5h13l-6 5.2h-13z" fill="#fff"/><path d="M1 11h13" stroke="#c8c8c8" stroke-width="0.8"/><path d="M7 1h13l-6 5.5h-13z" fill="#3a3a3a"/><path d="M7 0.5h13l-6 5.2h-13z" fill="#fff"/><path d="M1 6h13" stroke="#c8c8c8" stroke-width="0.8"/><circle cx="14" cy="11" r="5" fill="#f8f080"/><rect x="12" y="15" width="4" height="5" fill="#888"/></svg>
<svg style="left:449px;top:955px" width="20" height="20" viewBox="0 0 20 20"><path d="M7 11h13l-6 5.5h-13z" fill="#3a3a3a"/><path d="M7 10.5h13l-6 5.2h-13z" fill="#fff"/><path d="M1 16h13" stroke="#c8c8c8" stroke-width="0.8"/><path d="M7 6h13l-6 5.5h-13z" fill="#3a3a3a"/><path d="M7 5.5h13l-6 5.2h-13z" fill="#fff"/><path d="M1 11h13" stroke="#c8c8c8" stroke-width="0.8"/><path d="M7 1h13l-6 5.5h-13z" fill="#3a3a3a"/><path d="M7 0.5h13l-6 5.2h-13z" fill="#fff"/><path d="M1 6h13" stroke="#c8c8c8" stroke-width="0.8"/><circle cx="14" cy="11" r="5" fill="#a8c8e8"/><rect x="12" y="15" width="4" height="5" fill="#888"/></svg>
<div class="a" style="left:477px;top:956px;width:1px;height:18px;background:#e8e8e8;"></div>
<svg style="left:486px;top:955px" width="20" height="20" viewBox="0 0 20 20"><path d="M7 11h13l-6 5.5h-13z" fill="#3a3a3a"/><path d="M7 10.5h13l-6 5.2h-13z" fill="#6aa8f0"/><path d="M1 16h13" stroke="#c8c8c8" stroke-width="0.8"/><path d="M7 6h13l-6 5.5h-13z" fill="#3a3a3a"/><path d="M7 5.5h13l-6 5.2h-13z" fill="#6aa8f0"/><path d="M1 11h13" stroke="#c8c8c8" stroke-width="0.8"/><path d="M7 1h13l-6 5.5h-13z" fill="#3a3a3a"/><path d="M7 0.5h13l-6 5.2h-13z" fill="#6aa8f0"/><path d="M1 6h13" stroke="#c8c8c8" stroke-width="0.8"/><path d="M15 10v10M10 15h10M11.5 11.5l7 7M18.5 11.5l-7 7" stroke="#f8c000" stroke-width="2"/></svg>
<svg style="left:514px;top:955px" width="20" height="20" viewBox="0 0 20 20"><path d="M7 11h13l-6 5.5h-13z" fill="#3a3a3a"/><path d="M7 10.5h13l-6 5.2h-13z" fill="#6aa8f0"/><path d="M1 16h13" stroke="#c8c8c8" stroke-width="0.8"/><path d="M7 6h13l-6 5.5h-13z" fill="#3a3a3a"/><path d="M7 5.5h13l-6 5.2h-13z" fill="#6aa8f0"/><path d="M1 11h13" stroke="#c8c8c8" stroke-width="0.8"/><path d="M7 1h13l-6 5.5h-13z" fill="#3a3a3a"/><path d="M7 0.5h13l-6 5.2h-13z" fill="#6aa8f0"/><path d="M1 6h13" stroke="#c8c8c8" stroke-width="0.8"/></svg>
<div class="a" style="left:542px;top:956px;width:1px;height:18px;background:#e8e8e8;"></div>
<svg style="left:551px;top:955px" width="20" height="20" viewBox="0 0 20 20"><path d="M7 11h13l-6 5.5h-13z" fill="#3a3a3a"/><path d="M7 10.5h13l-6 5.2h-13z" fill="#fff"/><path d="M1 16h13" stroke="#c8c8c8" stroke-width="0.8"/><path d="M7 6h13l-6 5.5h-13z" fill="#3a3a3a"/><path d="M7 5.5h13l-6 5.2h-13z" fill="#fff"/><path d="M1 11h13" stroke="#c8c8c8" stroke-width="0.8"/><path d="M7 1h13l-6 5.5h-13z" fill="#3a3a3a"/><path d="M7 0.5h13l-6 5.2h-13z" fill="#fff"/><path d="M1 6h13" stroke="#c8c8c8" stroke-width="0.8"/><rect x="8" y="13" width="8" height="7" fill="#5a8ae0"/><path d="M14 12v-3c0-3 4-3 4 0v4" stroke="#bbb" stroke-width="1.3" fill="none"/></svg>
<svg style="left:579px;top:955px" width="20" height="20" viewBox="0 0 20 20"><path d="M7 11h13l-6 5.5h-13z" fill="#3a3a3a"/><path d="M7 10.5h13l-6 5.2h-13z" fill="#fff"/><path d="M1 16h13" stroke="#c8c8c8" stroke-width="0.8"/><path d="M7 6h13l-6 5.5h-13z" fill="#3a3a3a"/><path d="M7 5.5h13l-6 5.2h-13z" fill="#fff"/><path d="M1 11h13" stroke="#c8c8c8" stroke-width="0.8"/><path d="M7 1h13l-6 5.5h-13z" fill="#3a3a3a"/><path d="M7 0.5h13l-6 5.2h-13z" fill="#fff"/><path d="M1 6h13" stroke="#c8c8c8" stroke-width="0.8"/><rect x="10" y="13" width="9" height="7" fill="#e8c070"/><path d="M12 13v-3c0-3 5-3 5 0v3" stroke="#bbb" stroke-width="1.3" fill="none"/></svg>
<div class="a" style="left:607px;top:956px;width:1px;height:18px;background:#e8e8e8;"></div>
<svg style="left:616px;top:955px" width="20" height="20" viewBox="0 0 20 20"><path d="M7 11h13l-6 5.5h-13z" fill="#3a3a3a"/><path d="M7 10.5h13l-6 5.2h-13z" fill="#fff"/><path d="M1 16h13" stroke="#c8c8c8" stroke-width="0.8"/><path d="M7 6h13l-6 5.5h-13z" fill="#3a3a3a"/><path d="M7 5.5h13l-6 5.2h-13z" fill="#fff"/><path d="M1 11h13" stroke="#c8c8c8" stroke-width="0.8"/><path d="M7 1h13l-6 5.5h-13z" fill="#3a3a3a"/><path d="M7 0.5h13l-6 5.2h-13z" fill="#fff"/><path d="M1 6h13" stroke="#c8c8c8" stroke-width="0.8"/><path d="M8 6c4 0 5 4 2 8" stroke="#111" stroke-width="2" fill="none"/><path d="M7 13l5 3 1-5z" fill="#111"/></svg>
<svg style="left:644px;top:955px" width="20" height="20" viewBox="0 0 20 20"><path d="M7 11h13l-6 5.5h-13z" fill="#3a3a3a"/><path d="M7 10.5h13l-6 5.2h-13z" fill="#fff"/><path d="M1 16h13" stroke="#c8c8c8" stroke-width="0.8"/><path d="M7 6h13l-6 5.5h-13z" fill="#3a3a3a"/><path d="M7 5.5h13l-6 5.2h-13z" fill="#fff"/><path d="M1 11h13" stroke="#c8c8c8" stroke-width="0.8"/><path d="M7 1h13l-6 5.5h-13z" fill="#3a3a3a"/><path d="M7 0.5h13l-6 5.2h-13z" fill="#fff"/><path d="M1 6h13" stroke="#c8c8c8" stroke-width="0.8"/><path d="M6 18l8-10" stroke="#111" stroke-width="1.5"/><circle cx="8" cy="15" r="3" fill="#f8e000" stroke="#555" stroke-width="0.6"/><path d="M12 2l3 3" stroke="#111" stroke-width="2"/></svg>
<svg style="left:684px;top:955px" width="3" height="20" viewBox="0 0 3 20" shape-rendering="crispEdges"><rect x="0" y="0" width="1" height="1" fill="#000"/><rect x="2" y="0" width="1" height="1" fill="#000"/><rect x="0" y="1" width="1" height="1" fill="#fff"/><rect x="2" y="1" width="1" height="1" fill="#fff"/><rect x="0" y="2" width="1" height="1" fill="#000"/><rect x="2" y="2" width="1" height="1" fill="#000"/><rect x="0" y="3" width="1" height="1" fill="#fff"/><rect x="2" y="3" width="1" height="1" fill="#fff"/><rect x="0" y="4" width="1" height="1" fill="#000"/><rect x="2" y="4" width="1" height="1" fill="#000"/><rect x="0" y="5" width="1" height="1" fill="#fff"/><rect x="2" y="5" width="1" height="1" fill="#fff"/><rect x="0" y="6" width="1" height="1" fill="#000"/><rect x="2" y="6" width="1" height="1" fill="#000"/><rect x="0" y="7" width="1" height="1" fill="#fff"/><rect x="2" y="7" width="1" height="1" fill="#fff"/><rect x="0" y="8" width="1" height="1" fill="#000"/><rect x="2" y="8" width="1" height="1" fill="#000"/><rect x="0" y="9" width="1" height="1" fill="#fff"/><rect x="2" y="9" width="1" height="1" fill="#fff"/><rect x="0" y="10" width="1" height="1" fill="#000"/><rect x="2" y="10" width="1" height="1" fill="#000"/><rect x="0" y="11" width="1" height="1" fill="#fff"/><rect x="2" y="11" width="1" height="1" fill="#fff"/><rect x="0" y="12" width="1" height="1" fill="#000"/><rect x="2" y="12" width="1" height="1" fill="#000"/><rect x="0" y="13" width="1" height="1" fill="#fff"/><rect x="2" y="13" width="1" height="1" fill="#fff"/><rect x="0" y="14" width="1" height="1" fill="#000"/><rect x="2" y="14" width="1" height="1" fill="#000"/><rect x="0" y="15" width="1" height="1" fill="#fff"/><rect x="2" y="15" width="1" height="1" fill="#fff"/><rect x="0" y="16" width="1" height="1" fill="#000"/><rect x="2" y="16" width="1" height="1" fill="#000"/><rect x="0" y="17" width="1" height="1" fill="#fff"/><rect x="2" y="17" width="1" height="1" fill="#fff"/><rect x="0" y="18" width="1" height="1" fill="#000"/><rect x="2" y="18" width="1" height="1" fill="#000"/><rect x="0" y="19" width="1" height="1" fill="#fff"/><rect x="2" y="19" width="1" height="1" fill="#fff"/></svg>
<svg style="left:694px;top:955px" width="20" height="20" viewBox="0 0 20 20"><circle cx="7" cy="7" r="6.5" fill="#3a8a5a"/><circle cx="6" cy="6" r="3" fill="#7ab8e8"/><rect x="9" y="9" width="8" height="7" fill="#e8a8c8"/><circle cx="17" cy="13" r="2" fill="#1a8a8a"/></svg>
<div class="a" style="left:722px;top:956px;width:1px;height:18px;background:#e8e8e8;"></div>
<svg style="left:731px;top:955px" width="20" height="20" viewBox="0 0 20 20"><circle cx="10" cy="10" r="9.5" fill="#1a3a2a"/><circle cx="10" cy="10" r="8" fill="#3a8a4a"/><path d="M2 10h16M10 2v16M4 5h12M4 15h12" stroke="#1a2a4a" stroke-width="0.8"/></svg>
<div class="a" style="left:759px;top:956px;width:1px;height:18px;background:#e8e8e8;"></div>
<svg style="left:769px;top:955px" width="20" height="20" viewBox="0 0 20 20"><rect x="1" y="1" width="17" height="18" fill="#fff" stroke="#111" stroke-width="1.5"/><path d="M2 2l8 9 8-9" stroke="#111" stroke-width="1.2" fill="none"/><path d="M2 19l8-8 8 8z" fill="#e82a3a"/><path d="M5 17l3-3M9 18l4-4M13 18l3-3" stroke="#fff" stroke-width="1"/></svg>
<div class="a" style="left:796px;top:956px;width:1px;height:18px;background:#e8e8e8;"></div>
<svg style="left:805px;top:955px" width="20" height="20" viewBox="0 0 20 20"><rect x="1" y="1" width="18" height="18" rx="2" fill="#f4f4f4" stroke="#e8a8a8" stroke-width="0.8"/><path d="M2 10c3-8 13-8 16 0" stroke="#e87a4a" stroke-width="1" fill="none"/><text x="10" y="12" font-size="8" fill="#5a5af0" text-anchor="middle" font-family="Liberation Sans" font-weight="bold">10</text></svg>
<svg style="left:834px;top:955px" width="20" height="20" viewBox="0 0 20 20"><path d="M3 1h10l5 5v13h-15z" fill="#e82020"/><rect x="5" y="5" width="10" height="6" fill="#fff"/><path d="M7 8h8M7 8l3-2M7 8l3 2" stroke="#2a6ad8" stroke-width="1.5"/><text x="10" y="18" font-size="6" fill="#fff" text-anchor="middle" font-family="Liberation Sans" font-weight="bold">PDF</text></svg>
<div class="a" style="left:861px;top:956px;width:1px;height:18px;background:#e8e8e8;"></div>
<svg style="left:872px;top:955px" width="20" height="20" viewBox="0 0 20 20"><circle cx="10" cy="10" r="8.5" fill="#1a4a9a"/><path d="M3 12c4-2 10-4 14-8" stroke="#8ab8f0" stroke-width="2" fill="none"/><circle cx="7" cy="7" r="3" fill="#6aa0e0" opacity="0.6"/></svg>
<svg style="left:898px;top:955px" width="20" height="20" viewBox="0 0 20 20"><text x="10" y="7" font-size="8" fill="#f07a1a" text-anchor="middle" font-family="Liberation Sans" font-weight="bold">PDF</text><path d="M1 9h18v9h-18z" fill="#3a8ae0"/><path d="M4 12h4M11 12h5M9 9v9" stroke="#cde" stroke-width="1.5"/></svg>
<div class="a" style="left:926px;top:956px;width:1px;height:18px;background:#e8e8e8;"></div>
<svg style="left:936px;top:955px" width="20" height="20" viewBox="0 0 20 20"><rect x="0" y="0" width="16" height="19" fill="#c8d8e8" stroke="#7a8aa8" stroke-width="0.8"/><rect x="2" y="2" width="16" height="18" fill="#f0f4f8" stroke="#8a9ab8" stroke-width="0.8"/><path d="M5 9a5 5 0 0 1 9-2M15 12a5 5 0 0 1-9 2" stroke="#2aa84a" stroke-width="2" fill="none"/></svg>
<svg style="left:4px;top:992px" width="10" height="10" viewBox="0 0 10 10"><path d="M1 1l8 8M9 1l-8 8" stroke="#d0d0d0" stroke-width="1.6"/></svg>
<svg style="left:4px;top:1015px" width="11" height="6" viewBox="0 0 11 6"><path d="M0 0h11l-5.5 6z" fill="#c8c8c8"/></svg>
<div class="a" style="left:27px;top:986px;width:1873px;height:1px;background:#8c8c8c;"></div>
<div class="a" style="left:27px;top:987px;width:1873px;height:1px;background:#ffffff;"></div>
<div class="a" style="left:27px;top:988px;width:1873px;height:28px;background:#e4e4e4;"></div>
<div class="a" style="left:27px;top:1016px;width:1873px;height:1px;background:#9c9c9c;"></div>
<div class="a" style="left:27px;top:1017px;width:1873px;height:22px;background:#ffffff;"></div>
<div class="a" style="left:27px;top:1039px;width:1873px;height:1px;background:#e8e8e8;"></div>
<div class="a" style="left:0px;top:1040px;width:1900px;height:1px;background:#ffffff;"></div>
<div class="a" style="left:27px;top:986px;width:2px;height:54px;background:#8c8c8c;"></div>
<div class="a" style="left:0px;top:1041px;width:1900px;height:1px;background:#555555;"></div>
<div class="a" style="left:0px;top:1042px;width:1900px;height:1px;background:#b4b4b4;"></div>
<div class="t" style="left:30px;top:990px;font-size:16.5px;color:#000;font-family:'Liberation Mono',monospace">Polecenie: _OPEN</div>
<div class="t" style="left:31px;top:1020.5px;font-size:18.2px;color:#000;font-family:'Liberation Mono',monospace;-webkit-text-stroke:0.55px #000">Polecenie:</div>
<div class="a" style="left:1876px;top:988px;width:1px;height:28px;background:#ffffff;"></div>
<div class="a" style="left:1877px;top:988px;width:21px;height:28px;background:#efefef;"></div>
<svg style="left:1882px;top:991px" width="11" height="8" viewBox="0 0 11 8"><path d="M1 7l4.5-5 4.5 5" stroke="#555" stroke-width="1.7" fill="none"/></svg>
<svg style="left:1882px;top:1005px" width="11" height="8" viewBox="0 0 11 8"><path d="M1 1l4.5 5 4.5-5" stroke="#555" stroke-width="1.7" fill="none"/></svg>
<div class="a" style="left:1898px;top:986px;width:2px;height:54px;background:#ffffff;"></div>
<div class="a" style="left:0px;top:1043px;width:1900px;height:23px;background:#606060;"></div>
<div class="a" style="left:0px;top:1066px;width:1900px;height:1px;background:#66605a;"></div>
<div class="t" style="left:2px;top:1048px;font-size:14px;color:#f0f0f0;">Gotowy</div>
<div class="a" style="left:1136px;top:1043px;width:1px;height:23px;background:#b4b4b4;"></div>
<div class="a" style="left:1146px;top:1043px;width:1px;height:23px;background:#b4b4b4;"></div>
<div class="a" style="left:1312px;top:1043px;width:1px;height:23px;background:#b4b4b4;"></div>
<div class="a" style="left:1365px;top:1043px;width:1px;height:23px;background:#b4b4b4;"></div>
<div class="a" style="left:1395px;top:1043px;width:1px;height:23px;background:#b4b4b4;"></div>
<div class="a" style="left:1425px;top:1043px;width:1px;height:23px;background:#b4b4b4;"></div>
<div class="a" style="left:1455px;top:1043px;width:1px;height:23px;background:#b4b4b4;"></div>
<div class="a" style="left:1485px;top:1043px;width:1px;height:23px;background:#b4b4b4;"></div>
<div class="a" style="left:1515px;top:1043px;width:1px;height:23px;background:#b4b4b4;"></div>
<div class="a" style="left:1545px;top:1043px;width:1px;height:23px;background:#b4b4b4;"></div>
<div class="a" style="left:1575px;top:1043px;width:1px;height:23px;background:#b4b4b4;"></div>
<div class="a" style="left:1605px;top:1043px;width:1px;height:23px;background:#b4b4b4;"></div>
<div class="a" style="left:1635px;top:1043px;width:1px;height:23px;background:#b4b4b4;"></div>
<div class="a" style="left:1705px;top:1043px;width:1px;height:23px;background:#b4b4b4;"></div>
<div class="a" style="left:1735px;top:1043px;width:1px;height:23px;background:#b4b4b4;"></div>
<div class="a" style="left:1765px;top:1043px;width:1px;height:23px;background:#b4b4b4;"></div>
<div class="a" style="left:1795px;top:1043px;width:1px;height:23px;background:#b4b4b4;"></div>
<div class="a" style="left:1825px;top:1043px;width:1px;height:23px;background:#b4b4b4;"></div>
<div class="a" style="left:1855px;top:1043px;width:1px;height:23px;background:#b4b4b4;"></div>
<div class="a" style="left:1877px;top:1043px;width:1px;height:23px;background:#b4b4b4;"></div>
<div class="t" style="left:1151px;top:1048px;font-size:14px;color:#f0f0f0;">205.0732,289.2764,0</div>
<svg style="left:1320px;top:1045px" width="20" height="20" viewBox="0 0 20 20"><path d="M10 2L8 11 2 17l8-4 8 4-6-6z" fill="#e6e6e6"/><path d="M10 2l-1 9" stroke="#999" stroke-width="0.6"/></svg>
<div class="t" style="left:1345px;top:1048px;font-size:14px;color:#f0f0f0;">1:1</div>
<svg style="left:1372px;top:1045px" width="20" height="20" viewBox="0 0 20 20"><path d="M2 18L10 1l4 9" stroke="#5a9af0" stroke-width="1.5" fill="#3a6ab0"/><circle cx="14" cy="14" r="5" fill="#f8e820" stroke="#aaa" stroke-width="1"/></svg>
<svg style="left:1402px;top:1045px" width="20" height="20" viewBox="0 0 20 20"><path d="M10 3L8 12 2 18l8-4 7 4-6-6z" fill="#a8a8a8"/><path d="M16 0l-3 4h3l-2 4" stroke="#e8c820" stroke-width="1.5" fill="none"/></svg>
<svg style="left:1431px;top:1045px" width="20" height="20" viewBox="0 0 20 20"><rect x="3" y="3" width="3" height="3" fill="#e0e0e0"/><rect x="3" y="9" width="3" height="3" fill="#e0e0e0"/><rect x="3" y="15" width="3" height="3" fill="#e0e0e0"/><rect x="9" y="3" width="3" height="3" fill="#e0e0e0"/><rect x="9" y="9" width="3" height="3" fill="#e0e0e0"/><rect x="9" y="15" width="3" height="3" fill="#e0e0e0"/><rect x="15" y="3" width="3" height="3" fill="#e0e0e0"/><rect x="15" y="9" width="3" height="3" fill="#e0e0e0"/><rect x="15" y="15" width="3" height="3" fill="#e0e0e0"/></svg>
<svg style="left:1461px;top:1045px" width="20" height="20" viewBox="0 0 20 20"><rect x="1" y="1" width="18" height="18" rx="3" fill="#7ab8f0"/><rect x="4" y="4" width="3" height="3" fill="#3a6a9a"/><rect x="4" y="9" width="3" height="3" fill="#3a6a9a"/><rect x="4" y="14" width="3" height="3" fill="#3a6a9a"/><rect x="9" y="4" width="3" height="3" fill="#3a6a9a"/><rect x="9" y="9" width="3" height="3" fill="#3a6a9a"/><rect x="9" y="14" width="3" height="3" fill="#3a6a9a"/><rect x="14" y="4" width="3" height="3" fill="#3a6a9a"/><rect x="14" y="9" width="3" height="3" fill="#3a6a9a"/><rect x="14" y="14" width="3" height="3" fill="#3a6a9a"/></svg>
<svg style="left:1491px;top:1045px" width="20" height="20" viewBox="0 0 20 20"><path d="M3 18h14V3M9 18v-6h8" stroke="#aaa" stroke-width="2" fill="none"/></svg>
<svg style="left:1521px;top:1045px" width="20" height="20" viewBox="0 0 20 20"><circle cx="9" cy="12" r="6.5" stroke="#aaa" stroke-width="1.5" fill="none"/><path d="M9 12l8-8M9 12h9" stroke="#e82a2a" stroke-width="1.3"/></svg>
<svg style="left:1551px;top:1045px" width="20" height="20" viewBox="0 0 20 20"><rect x="2" y="3" width="15" height="15" rx="2" fill="none" stroke="#7ab8f0" stroke-width="2.5"/><rect x="5" y="6" width="9" height="9" fill="none" stroke="#3a6a9a" stroke-width="1"/><rect x="15" y="1" width="4" height="4" fill="#1ae81a" stroke="#222" stroke-width="0.8"/></svg>
<svg style="left:1581px;top:1045px" width="20" height="20" viewBox="0 0 20 20"><path d="M3 5l7 9h9" stroke="#7ab8f0" stroke-width="3" fill="none" stroke-linecap="round"/></svg>
<svg style="left:1611px;top:1045px" width="20" height="20" viewBox="0 0 20 20"><rect x="1" y="3" width="18" height="2" fill="#aaa"/><rect x="1" y="8" width="18" height="4" fill="#aaa"/><rect x="1" y="14" width="18" height="4" fill="#aaa"/></svg>
<div class="t" style="left:1640px;top:1048px;font-size:13px;color:#f0f0f0;">MOBSZAR</div>
<svg style="left:1711px;top:1045px" width="20" height="20" viewBox="0 0 20 20"><circle cx="10" cy="10" r="7" fill="none" stroke="#9a9a9a" stroke-width="4" stroke-dasharray="3 2"/><circle cx="10" cy="10" r="5" fill="none" stroke="#9a9a9a" stroke-width="3"/></svg>
<svg style="left:1741px;top:1045px" width="20" height="20" viewBox="0 0 20 20"><circle cx="10" cy="10" r="9.5" fill="#f4f4f4" stroke="#999" stroke-width="1"/><path d="M6 14l8-8" stroke="#1ac81a" stroke-width="1.3"/></svg>
<svg style="left:1771px;top:1045px" width="20" height="20" viewBox="0 0 20 20"><path d="M3 1v7M0 4.5h7" stroke="#5aa8f0" stroke-width="1.5"/><rect x="5" y="12" width="15" height="6" rx="2" fill="#7ab8f0" stroke="#5a9ad0" stroke-width="1"/></svg>
<svg style="left:1801px;top:1045px" width="20" height="20" viewBox="0 0 20 20"><path d="M2 2v17h17M2 19l9-9" stroke="#aaa" stroke-width="1.3" fill="none"/><path d="M16 0l-2 4h3l-2 4" stroke="#e8c820" stroke-width="1.5" fill="none"/></svg>
<svg style="left:1831px;top:1045px" width="20" height="20" viewBox="0 0 20 20"><circle cx="6" cy="5" r="4.5" fill="#b0b0b0"/><rect x="1" y="11" width="10" height="9" fill="#b0b0b0"/><path d="M11 15l9-6v11z" fill="#b0b0b0"/></svg>
<svg style="left:1858px;top:1045px" width="20" height="20" viewBox="0 0 20 20"><defs><radialGradient id="ckg" cx="0.35" cy="0.3" r="0.7"><stop offset="0" stop-color="#b8f0b0"/><stop offset="0.6" stop-color="#5aaa5a"/><stop offset="1" stop-color="#3a8a3a"/></radialGradient></defs><circle cx="10" cy="10" r="8.5" fill="url(#ckg)"/><path d="M5 10l4 4 7-7" stroke="#fff" stroke-width="2.5" fill="none"/></svg>
<svg style="left:1889px;top:1056px" width="11" height="11" viewBox="0 0 11 11"><rect x="9" y="1" width="2" height="2" fill="#f0e8e0"/><rect x="8" y="0" width="2" height="2" fill="#000"/><rect x="5" y="5" width="2" height="2" fill="#f0e8e0"/><rect x="4" y="4" width="2" height="2" fill="#000"/><rect x="9" y="5" width="2" height="2" fill="#f0e8e0"/><rect x="8" y="4" width="2" height="2" fill="#000"/><rect x="1" y="9" width="2" height="2" fill="#f0e8e0"/><rect x="0" y="8" width="2" height="2" fill="#000"/><rect x="5" y="9" width="2" height="2" fill="#f0e8e0"/><rect x="4" y="8" width="2" height="2" fill="#000"/><rect x="9" y="9" width="2" height="2" fill="#f0e8e0"/><rect x="8" y="8" width="2" height="2" fill="#000"/></svg>
<div class="a" style="left:0px;top:1067px;width:1900px;height:1px;background:#1e7ad8;"></div>
<div class="a" style="left:0px;top:1068px;width:1906px;height:3px;background:#001a38;"></div>
<div class="a" style="left:0px;top:1071px;width:1906px;height:2px;background:#0a0f14;"></div>
<div class="a" style="left:564px;top:1071px;width:61px;height:2px;background:#3c4046;"></div>
<div class="a" style="left:1900px;top:0px;width:1px;height:1068px;background:#1e7ad8;"></div>
<div class="a" style="left:1901px;top:0px;width:5px;height:1073px;background:#001a38;"></div>
<div class="a" style="left:1431px;top:858px;width:455px;height:150px;background:linear-gradient(175deg,#202020 0%,#242424 55%,#2a2a2a 100%);"></div>
<div class="a" style="left:1458px;top:895px;width:46px;height:46px;border-radius:50%;background:#0a78d4"></div>
<div class="a" style="left:1479px;top:911px;width:3px;height:21px;background:#ffffff;"></div>
<div class="a" style="left:1479px;top:904px;width:3px;height:3px;background:#ffffff;"></div>
<div class="t" style="left:1530px;top:889px;font-size:17.5px;color:#ffffff;font-weight:bold">Greenshot</div>
<div class="t" style="left:1530px;top:912px;font-size:18.3px;color:#bebebe;">Exported to: Save directly (using</div>
<div class="t" style="left:1530px;top:937px;font-size:18.3px;color:#bebebe;">preferred file output settings)</div>
<div class="t" style="left:1530px;top:966px;font-size:15px;color:#a8a8a8;">Greenshot</div>
<svg style="left:1298px;top:61px" width="13" height="21" viewBox="0 0 13 21"><path d="M0.5 0.5v15l4-4 3 6.5 2.5-1-3-6.5h5.5z" fill="#fff" stroke="#000" stroke-width="1"/></svg></body></html>
